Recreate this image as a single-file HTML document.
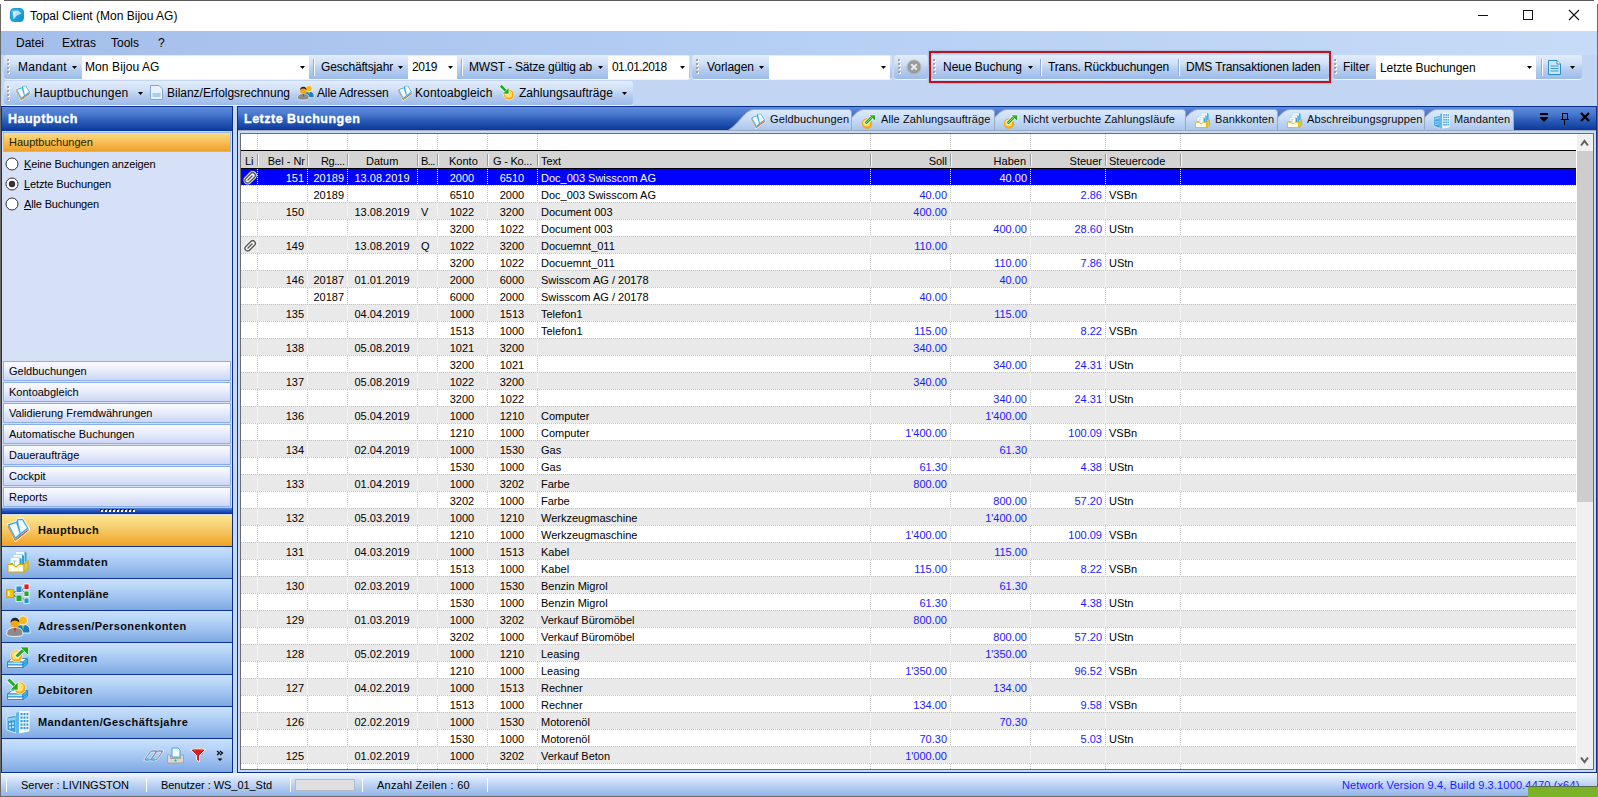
<!DOCTYPE html><html><head><meta charset="utf-8"><style>
html,body{margin:0;padding:0;width:1598px;height:797px;overflow:hidden;background:#fff;}
body{position:relative;font-family:"Liberation Sans",sans-serif;color:#000;}
.t{position:absolute;white-space:nowrap;}
.r{position:absolute;box-sizing:border-box;}
svg{position:absolute;overflow:visible;}
</style></head><body>
<div class="r" style="left:4px;top:0px;width:1590px;height:1px;background:#5b5b5b"></div>
<div class="r" style="left:0px;top:4px;width:1px;height:793px;background:#6a6a6a"></div>
<div class="r" style="left:1597px;top:4px;width:1px;height:793px;background:#6a6a6a"></div>
<svg style="left:10px;top:8px" width="14" height="14"><defs><linearGradient id="ig" x1="0" y1="0" x2="1" y2="1"><stop offset="0" stop-color="#3cb8ea"/><stop offset="1" stop-color="#0a8ccc"/></linearGradient></defs><rect x="0.5" y="0.5" width="13" height="13" rx="3.5" fill="url(#ig)" stroke="#1a9ad6" stroke-width="1"/><path d="M2.5 3 L8 2.5 L11.5 5.5 L7 7.5 L3.5 11.5 Z" fill="#e6f7fd" opacity="0.75"/><path d="M3 4 L6 3.5 L4 9 Z" fill="#fff" opacity="0.7"/></svg>
<div class="t" style="left:30px;top:8.84px;font-size:12px;line-height:14px;">Topal Client (Mon Bijou AG)</div>
<div class="r" style="left:1478px;top:15px;width:10px;height:1px;background:#111"></div>
<div class="r" style="left:1523px;top:10px;width:10px;height:10px;border:1px solid #111"></div>
<svg style="left:1569px;top:10px" width="10" height="10"><path d="M0 0 L10 10 M10 0 L0 10" stroke="#111" stroke-width="1.1"/></svg>
<div class="r" style="left:1px;top:31px;width:1596px;height:24px;background:linear-gradient(to right,#a4beeb,#b6cff4 50%,#c6dbf6)"></div>
<div class="t" style="left:16px;top:35.84px;font-size:12px;line-height:14px;">Datei</div>
<div class="t" style="left:62px;top:35.84px;font-size:12px;line-height:14px;">Extras</div>
<div class="t" style="left:111px;top:35.84px;font-size:12px;line-height:14px;">Tools</div>
<div class="t" style="left:158px;top:35.84px;font-size:12px;line-height:14px;">?</div>
<div class="r" style="left:1px;top:55px;width:1596px;height:51px;background:#c2d6f3"></div>
<div class="r" style="left:4px;top:55px;width:686px;height:24px;background:linear-gradient(to bottom,#e3edfb 0%,#d0e0f7 35%,#b6cdf0 60%,#9dbbe9 100%);border-radius:3px;box-shadow:0 1px 0 #eef4fd;"></div>
<div class="r" style="left:8px;top:60px;width:2px;height:2px;background:#fff"></div>
<div class="r" style="left:7px;top:59px;width:2px;height:2px;background:#aaa294"></div>
<div class="r" style="left:8px;top:64px;width:2px;height:2px;background:#fff"></div>
<div class="r" style="left:7px;top:63px;width:2px;height:2px;background:#aaa294"></div>
<div class="r" style="left:8px;top:68px;width:2px;height:2px;background:#fff"></div>
<div class="r" style="left:7px;top:67px;width:2px;height:2px;background:#aaa294"></div>
<div class="r" style="left:8px;top:72px;width:2px;height:2px;background:#fff"></div>
<div class="r" style="left:7px;top:71px;width:2px;height:2px;background:#aaa294"></div>
<div class="t" style="left:18px;top:59.84px;font-size:12px;line-height:14px;letter-spacing:0.328px;">Mandant</div>
<svg style="left:72px;top:66px" width="5" height="3"><path d="M0 0 H5 L2.5 3 Z" fill="#000"/></svg>
<div class="r" style="left:82px;top:56px;width:227px;height:23px;background:#fff"></div>
<div class="t" style="left:85px;top:59.84px;font-size:12px;line-height:14px;letter-spacing:0.094px;">Mon Bijou AG</div>
<svg style="left:300px;top:66px" width="5" height="3"><path d="M0 0 H5 L2.5 3 Z" fill="#000"/></svg>
<div class="r" style="left:313px;top:59px;width:1px;height:17px;background:#93acd6"></div>
<div class="r" style="left:314px;top:59px;width:1px;height:17px;background:#fff"></div>
<div class="t" style="left:321px;top:59.84px;font-size:12px;line-height:14px;letter-spacing:-0.157px;">Geschäftsjahr</div>
<svg style="left:398px;top:66px" width="5" height="3"><path d="M0 0 H5 L2.5 3 Z" fill="#000"/></svg>
<div class="r" style="left:408px;top:56px;width:49px;height:23px;background:#fff"></div>
<div class="t" style="left:412px;top:59.84px;font-size:12px;line-height:14px;letter-spacing:-0.424px;">2019</div>
<svg style="left:448px;top:66px" width="5" height="3"><path d="M0 0 H5 L2.5 3 Z" fill="#000"/></svg>
<div class="r" style="left:461px;top:59px;width:1px;height:17px;background:#93acd6"></div>
<div class="r" style="left:462px;top:59px;width:1px;height:17px;background:#fff"></div>
<div class="t" style="left:469px;top:59.84px;font-size:12px;line-height:14px;letter-spacing:-0.159px;">MWST - Sätze gültig ab</div>
<svg style="left:598px;top:66px" width="5" height="3"><path d="M0 0 H5 L2.5 3 Z" fill="#000"/></svg>
<div class="r" style="left:608px;top:56px;width:81px;height:23px;background:#fff"></div>
<div class="t" style="left:612px;top:59.84px;font-size:12px;line-height:14px;letter-spacing:-0.556px;">01.01.2018</div>
<svg style="left:680px;top:66px" width="5" height="3"><path d="M0 0 H5 L2.5 3 Z" fill="#000"/></svg>
<div class="r" style="left:692px;top:55px;width:200px;height:24px;background:linear-gradient(to bottom,#e3edfb 0%,#d0e0f7 35%,#b6cdf0 60%,#9dbbe9 100%);border-radius:3px;box-shadow:0 1px 0 #eef4fd;"></div>
<div class="r" style="left:697px;top:60px;width:2px;height:2px;background:#fff"></div>
<div class="r" style="left:696px;top:59px;width:2px;height:2px;background:#aaa294"></div>
<div class="r" style="left:697px;top:64px;width:2px;height:2px;background:#fff"></div>
<div class="r" style="left:696px;top:63px;width:2px;height:2px;background:#aaa294"></div>
<div class="r" style="left:697px;top:68px;width:2px;height:2px;background:#fff"></div>
<div class="r" style="left:696px;top:67px;width:2px;height:2px;background:#aaa294"></div>
<div class="r" style="left:697px;top:72px;width:2px;height:2px;background:#fff"></div>
<div class="r" style="left:696px;top:71px;width:2px;height:2px;background:#aaa294"></div>
<div class="t" style="left:707px;top:59.84px;font-size:12px;line-height:14px;letter-spacing:-0.047px;">Vorlagen</div>
<svg style="left:759px;top:66px" width="5" height="3"><path d="M0 0 H5 L2.5 3 Z" fill="#000"/></svg>
<div class="r" style="left:769px;top:56px;width:121px;height:23px;background:#fff"></div>
<svg style="left:881px;top:66px" width="5" height="3"><path d="M0 0 H5 L2.5 3 Z" fill="#000"/></svg>
<div class="r" style="left:894px;top:55px;width:34px;height:24px;background:linear-gradient(to bottom,#e3edfb 0%,#d0e0f7 35%,#b6cdf0 60%,#9dbbe9 100%);border-radius:3px;box-shadow:0 1px 0 #eef4fd;"></div>
<div class="r" style="left:899px;top:60px;width:2px;height:2px;background:#fff"></div>
<div class="r" style="left:898px;top:59px;width:2px;height:2px;background:#aaa294"></div>
<div class="r" style="left:899px;top:64px;width:2px;height:2px;background:#fff"></div>
<div class="r" style="left:898px;top:63px;width:2px;height:2px;background:#aaa294"></div>
<div class="r" style="left:899px;top:68px;width:2px;height:2px;background:#fff"></div>
<div class="r" style="left:898px;top:67px;width:2px;height:2px;background:#aaa294"></div>
<div class="r" style="left:899px;top:72px;width:2px;height:2px;background:#fff"></div>
<div class="r" style="left:898px;top:71px;width:2px;height:2px;background:#aaa294"></div>
<svg style="left:906px;top:59px" width="16" height="16"><circle cx="8" cy="8" r="7" fill="#9a9a9a"/><circle cx="8" cy="8" r="7" fill="none" stroke="#b8b8b8" stroke-width="1"/><path d="M5.3 5.3 L10.7 10.7 M10.7 5.3 L5.3 10.7" stroke="#e8e8e8" stroke-width="2"/></svg>
<div class="r" style="left:931px;top:55px;width:398px;height:24px;background:linear-gradient(to bottom,#e3edfb 0%,#d0e0f7 35%,#b6cdf0 60%,#9dbbe9 100%);border-radius:3px;box-shadow:0 1px 0 #eef4fd;"></div>
<div class="r" style="left:934px;top:60px;width:2px;height:2px;background:#fff"></div>
<div class="r" style="left:933px;top:59px;width:2px;height:2px;background:#aaa294"></div>
<div class="r" style="left:934px;top:64px;width:2px;height:2px;background:#fff"></div>
<div class="r" style="left:933px;top:63px;width:2px;height:2px;background:#aaa294"></div>
<div class="r" style="left:934px;top:68px;width:2px;height:2px;background:#fff"></div>
<div class="r" style="left:933px;top:67px;width:2px;height:2px;background:#aaa294"></div>
<div class="r" style="left:934px;top:72px;width:2px;height:2px;background:#fff"></div>
<div class="r" style="left:933px;top:71px;width:2px;height:2px;background:#aaa294"></div>
<div class="t" style="left:943px;top:59.84px;font-size:12px;line-height:14px;letter-spacing:-0.033px;">Neue Buchung</div>
<svg style="left:1028px;top:66px" width="5" height="3"><path d="M0 0 H5 L2.5 3 Z" fill="#000"/></svg>
<div class="r" style="left:1040px;top:59px;width:1px;height:17px;background:#93acd6"></div>
<div class="r" style="left:1041px;top:59px;width:1px;height:17px;background:#fff"></div>
<div class="t" style="left:1048px;top:59.84px;font-size:12px;line-height:14px;letter-spacing:-0.132px;">Trans. Rückbuchungen</div>
<div class="r" style="left:1178px;top:59px;width:1px;height:17px;background:#93acd6"></div>
<div class="r" style="left:1179px;top:59px;width:1px;height:17px;background:#fff"></div>
<div class="t" style="left:1186px;top:59.84px;font-size:12px;line-height:14px;letter-spacing:-0.156px;">DMS Transaktionen laden</div>
<div class="r" style="left:929px;top:51px;width:402px;height:32px;border:2px solid #c0101a;box-shadow:0 0 2px rgba(60,60,80,0.35)"></div>
<div class="r" style="left:1333px;top:55px;width:249px;height:24px;background:linear-gradient(to bottom,#e3edfb 0%,#d0e0f7 35%,#b6cdf0 60%,#9dbbe9 100%);border-radius:3px;box-shadow:0 1px 0 #eef4fd;"></div>
<div class="r" style="left:1335px;top:60px;width:2px;height:2px;background:#fff"></div>
<div class="r" style="left:1334px;top:59px;width:2px;height:2px;background:#aaa294"></div>
<div class="r" style="left:1335px;top:64px;width:2px;height:2px;background:#fff"></div>
<div class="r" style="left:1334px;top:63px;width:2px;height:2px;background:#aaa294"></div>
<div class="r" style="left:1335px;top:68px;width:2px;height:2px;background:#fff"></div>
<div class="r" style="left:1334px;top:67px;width:2px;height:2px;background:#aaa294"></div>
<div class="r" style="left:1335px;top:72px;width:2px;height:2px;background:#fff"></div>
<div class="r" style="left:1334px;top:71px;width:2px;height:2px;background:#aaa294"></div>
<div class="t" style="left:1343px;top:59.84px;font-size:12px;line-height:14px;letter-spacing:-0.028px;">Filter</div>
<div class="r" style="left:1376px;top:56px;width:160px;height:23px;background:#fff"></div>
<div class="t" style="left:1380px;top:60.84px;font-size:12px;line-height:14px;letter-spacing:-0.078px;">Letzte Buchungen</div>
<svg style="left:1527px;top:66px" width="5" height="3"><path d="M0 0 H5 L2.5 3 Z" fill="#000"/></svg>
<div class="r" style="left:1541px;top:59px;width:1px;height:17px;background:#93acd6"></div>
<div class="r" style="left:1542px;top:59px;width:1px;height:17px;background:#fff"></div>
<svg style="left:1548px;top:60px" width="13" height="15"><path d="M0.5 0.5 H9 L12.5 4 V14.5 H0.5 Z" fill="#cfe3f5" stroke="#2a8fc4"/><path d="M9 0.5 V4 H12.5" fill="#fff" stroke="#2a8fc4"/><path d="M2.5 6 H10.5 M2.5 8.5 H10.5 M2.5 11 H10.5" stroke="#3b9ad0" stroke-width="1"/></svg>
<svg style="left:1570px;top:66px" width="5" height="3"><path d="M0 0 H5 L2.5 3 Z" fill="#000"/></svg>
<div class="r" style="left:4px;top:81px;width:629px;height:24px;background:linear-gradient(to bottom,#e3edfb 0%,#d0e0f7 35%,#b6cdf0 60%,#9dbbe9 100%);border-radius:3px;box-shadow:0 1px 0 #eef4fd;"></div>
<div class="r" style="left:8px;top:87px;width:2px;height:2px;background:#fff"></div>
<div class="r" style="left:7px;top:86px;width:2px;height:2px;background:#aaa294"></div>
<div class="r" style="left:8px;top:91px;width:2px;height:2px;background:#fff"></div>
<div class="r" style="left:7px;top:90px;width:2px;height:2px;background:#aaa294"></div>
<div class="r" style="left:8px;top:95px;width:2px;height:2px;background:#fff"></div>
<div class="r" style="left:7px;top:94px;width:2px;height:2px;background:#aaa294"></div>
<div class="r" style="left:8px;top:99px;width:2px;height:2px;background:#fff"></div>
<div class="r" style="left:7px;top:98px;width:2px;height:2px;background:#aaa294"></div>
<svg style="left:15px;top:85px" width="16" height="16" viewBox="0 0 24 24"><path d="M0.8 6 L10 2.6 L11 0.4 L17 -0.2 L23.6 10 L23.9 12.4 L9.6 24 L8.4 23.6 Z" fill="#fff"/><path d="M1.8 6.6 L9.2 21 L22.8 10.8 L22.8 12.6 L9.6 23 L8.6 22.6 L1.8 9 Z" fill="#c88a3a"/><path d="M1.8 6.2 L10.4 3.4 L11.2 1.2 L16.8 0.8 L22.6 10.4 L9.3 21 Z" fill="#38a6e0"/><path d="M3.4 7.2 L10.2 5 L13.6 15.6 L9.6 19.2 Z" fill="#f2f9ff"/><path d="M11.9 2.4 L16.1 2 L21 10.1 L14.7 15 Z" fill="#f2f9ff"/><path d="M12.6 19.6 L21.8 12.4" stroke="#e02828" stroke-width="1" stroke-dasharray="1.2 1.2"/></svg>
<div class="t" style="left:34px;top:85.84px;font-size:12px;line-height:14px;letter-spacing:0.22px;">Hauptbuchungen</div>
<svg style="left:138px;top:92px" width="5" height="3"><path d="M0 0 H5 L2.5 3 Z" fill="#000"/></svg>
<svg style="left:150px;top:85px" width="13" height="15"><path d="M0.5 0.5 H9 L12.5 4 V14.5 H0.5 Z" fill="#e9f1fa" stroke="#7fa8cc"/><path d="M2.5 9 H10.5 M2.5 11 H10.5" stroke="#6aaad8"/></svg>
<div class="t" style="left:167px;top:85.84px;font-size:12px;line-height:14px;letter-spacing:-0.019px;">Bilanz/Erfolgsrechnung</div>
<svg style="left:297px;top:84px" width="17" height="17" viewBox="0 0 24 24"><path d="M9 17 Q9 10.5 17.5 10.5 Q24 10.5 24 17 V19 H9 Z" fill="#1a7ad0" stroke="#fff" stroke-width="0.8"/><path d="M15.5 11 L17 16 L18.5 11 Z" fill="#80d040"/><circle cx="17" cy="6.5" r="4.5" fill="#f6b820" stroke="#fff" stroke-width="0.8"/><path d="M0.5 20 Q0.5 13.5 9 13.5 Q17 13.5 17 20 Q17 22.5 9 22.5 Q0.5 22.5 0.5 20 Z" fill="#8c8c8c" stroke="#fff" stroke-width="0.8"/><path d="M8 14 L9 19 L10 14 Z" fill="#e02020"/><circle cx="9" cy="9" r="4.6" fill="#f4a810"/><path d="M4.5 8.5 Q5 3.8 9 3.8 Q13 3.8 13.5 8.5 Q11 6.5 9 6.5 Q6.5 6.5 4.5 8.5 Z" fill="#222"/></svg>
<div class="t" style="left:317px;top:85.84px;font-size:12px;line-height:14px;letter-spacing:-0.145px;">Alle Adressen</div>
<svg style="left:397px;top:85px" width="16" height="16" viewBox="0 0 24 24"><path d="M0.8 6 L10 2.6 L11 0.4 L17 -0.2 L23.6 10 L23.9 12.4 L9.6 24 L8.4 23.6 Z" fill="#fff"/><path d="M1.8 6.6 L9.2 21 L22.8 10.8 L22.8 12.6 L9.6 23 L8.6 22.6 L1.8 9 Z" fill="#c88a3a"/><path d="M1.8 6.2 L10.4 3.4 L11.2 1.2 L16.8 0.8 L22.6 10.4 L9.3 21 Z" fill="#38a6e0"/><path d="M3.4 7.2 L10.2 5 L13.6 15.6 L9.6 19.2 Z" fill="#f2f9ff"/><path d="M11.9 2.4 L16.1 2 L21 10.1 L14.7 15 Z" fill="#f2f9ff"/><path d="M12.6 19.6 L21.8 12.4" stroke="#e02828" stroke-width="1" stroke-dasharray="1.2 1.2"/></svg>
<div class="t" style="left:415px;top:85.84px;font-size:12px;line-height:14px;letter-spacing:0.11px;">Kontoabgleich</div>
<svg style="left:499px;top:84px" width="17" height="17" viewBox="0 0 24 24"><circle cx="14" cy="15" r="7.5" fill="#f4a818" stroke="#fff" stroke-width="0.8"/><circle cx="13.5" cy="14.5" r="5" fill="#ffe060"/><path d="M2.5 2.5 L11 11" stroke="#fff" stroke-width="5.5"/><path d="M2.5 2.5 L11 11" stroke="#22a822" stroke-width="3.6"/><path d="M14 5 V14 H5 Z" fill="#22a822" stroke="#fff" stroke-width="0.8"/></svg>
<div class="t" style="left:519px;top:85.84px;font-size:12px;line-height:14px;letter-spacing:0.037px;">Zahlungsaufträge</div>
<svg style="left:622px;top:92px" width="5" height="3"><path d="M0 0 H5 L2.5 3 Z" fill="#000"/></svg>
<div class="r" style="left:1px;top:106px;width:1596px;height:667px;background:#c6daf6"></div>
<div class="r" style="left:1px;top:106px;width:232px;height:666px;background:#d6e0f7"></div>
<div class="r" style="left:1px;top:106px;width:1px;height:667px;background:#0a2f8f"></div>
<div class="r" style="left:232px;top:106px;width:1px;height:667px;background:#0a2f8f"></div>
<div class="r" style="left:1px;top:106px;width:232px;height:1px;background:#0a2f8f"></div>
<div class="r" style="left:2px;top:107px;width:230px;height:24px;background:linear-gradient(to bottom,#5d8bdc 0%,#4a79cf 30%,#2e5fbb 55%,#1a49a6 82%,#0636a0 100%)"></div>
<div class="t" style="left:8px;top:111.97px;font-size:12.5px;line-height:15px;font-weight:bold;color:#fff;letter-spacing:0.5px;-webkit-text-stroke:0.35px #fff;">Hauptbuch</div>
<div class="r" style="left:2px;top:131px;width:230px;height:2px;background:#c6d8f5"></div>
<div class="r" style="left:3px;top:132px;width:228px;height:20px;background:linear-gradient(to bottom,#fcdc88,#f6bb50 55%,#eea22a);border:1px solid #9ebbe8"></div>
<div class="t" style="left:9px;top:135.69px;font-size:11px;line-height:13px;color:#1b1b00;">Hauptbuchungen</div>
<svg style="left:4.5px;top:156.5px" width="14" height="14"><circle cx="7" cy="7" r="6" fill="#fff" stroke="#333" stroke-width="1"/></svg>
<div class="t" style="left:24px;top:157.69px;font-size:11px;line-height:13px;letter-spacing:-0.128px;"><u>K</u>eine Buchungen anzeigen</div>
<svg style="left:4.5px;top:176.5px" width="14" height="14"><circle cx="7" cy="7" r="6" fill="#fff" stroke="#333" stroke-width="1"/><circle cx="7" cy="7" r="3.2" fill="#333"/></svg>
<div class="t" style="left:24px;top:177.69px;font-size:11px;line-height:13px;letter-spacing:-0.105px;"><u>L</u>etzte Buchungen</div>
<svg style="left:4.5px;top:196.5px" width="14" height="14"><circle cx="7" cy="7" r="6" fill="#fff" stroke="#333" stroke-width="1"/></svg>
<div class="t" style="left:24px;top:197.69px;font-size:11px;line-height:13px;letter-spacing:-0.147px;"><u>A</u>lle Buchungen</div>
<div class="r" style="left:3px;top:361px;width:228px;height:20px;background:linear-gradient(to bottom,#fbfcff,#e8edfb 45%,#cdd7f6);border:1px solid #8aaeea"></div>
<div class="t" style="left:9px;top:364.69px;font-size:11px;line-height:13px;">Geldbuchungen</div>
<div class="r" style="left:3px;top:382px;width:228px;height:20px;background:linear-gradient(to bottom,#fbfcff,#e8edfb 45%,#cdd7f6);border:1px solid #8aaeea"></div>
<div class="t" style="left:9px;top:385.69px;font-size:11px;line-height:13px;">Kontoabgleich</div>
<div class="r" style="left:3px;top:403px;width:228px;height:20px;background:linear-gradient(to bottom,#fbfcff,#e8edfb 45%,#cdd7f6);border:1px solid #8aaeea"></div>
<div class="t" style="left:9px;top:406.69px;font-size:11px;line-height:13px;">Validierung Fremdwährungen</div>
<div class="r" style="left:3px;top:424px;width:228px;height:20px;background:linear-gradient(to bottom,#fbfcff,#e8edfb 45%,#cdd7f6);border:1px solid #8aaeea"></div>
<div class="t" style="left:9px;top:427.69px;font-size:11px;line-height:13px;">Automatische Buchungen</div>
<div class="r" style="left:3px;top:445px;width:228px;height:20px;background:linear-gradient(to bottom,#fbfcff,#e8edfb 45%,#cdd7f6);border:1px solid #8aaeea"></div>
<div class="t" style="left:9px;top:448.69px;font-size:11px;line-height:13px;">Daueraufträge</div>
<div class="r" style="left:3px;top:466px;width:228px;height:20px;background:linear-gradient(to bottom,#fbfcff,#e8edfb 45%,#cdd7f6);border:1px solid #8aaeea"></div>
<div class="t" style="left:9px;top:469.69px;font-size:11px;line-height:13px;">Cockpit</div>
<div class="r" style="left:3px;top:487px;width:228px;height:20px;background:linear-gradient(to bottom,#fbfcff,#e8edfb 45%,#cdd7f6);border:1px solid #8aaeea"></div>
<div class="t" style="left:9px;top:490.69px;font-size:11px;line-height:13px;">Reports</div>
<div class="r" style="left:2px;top:507px;width:230px;height:1px;background:#b4d0f4"></div>
<div class="r" style="left:2px;top:508px;width:230px;height:6px;background:linear-gradient(to bottom,#5588dc,#2a5ac0 45%,#0a2e9c)"></div>
<div class="r" style="left:101px;top:510px;width:2px;height:2px;background:#fff"></div>
<div class="r" style="left:100px;top:509px;width:2px;height:2px;background:#1a1a3a"></div>
<div class="r" style="left:101px;top:510px;width:2px;height:2px;background:#fff"></div>
<div class="r" style="left:105px;top:510px;width:2px;height:2px;background:#fff"></div>
<div class="r" style="left:104px;top:509px;width:2px;height:2px;background:#1a1a3a"></div>
<div class="r" style="left:105px;top:510px;width:2px;height:2px;background:#fff"></div>
<div class="r" style="left:109px;top:510px;width:2px;height:2px;background:#fff"></div>
<div class="r" style="left:108px;top:509px;width:2px;height:2px;background:#1a1a3a"></div>
<div class="r" style="left:109px;top:510px;width:2px;height:2px;background:#fff"></div>
<div class="r" style="left:113px;top:510px;width:2px;height:2px;background:#fff"></div>
<div class="r" style="left:112px;top:509px;width:2px;height:2px;background:#1a1a3a"></div>
<div class="r" style="left:113px;top:510px;width:2px;height:2px;background:#fff"></div>
<div class="r" style="left:117px;top:510px;width:2px;height:2px;background:#fff"></div>
<div class="r" style="left:116px;top:509px;width:2px;height:2px;background:#1a1a3a"></div>
<div class="r" style="left:117px;top:510px;width:2px;height:2px;background:#fff"></div>
<div class="r" style="left:121px;top:510px;width:2px;height:2px;background:#fff"></div>
<div class="r" style="left:120px;top:509px;width:2px;height:2px;background:#1a1a3a"></div>
<div class="r" style="left:121px;top:510px;width:2px;height:2px;background:#fff"></div>
<div class="r" style="left:125px;top:510px;width:2px;height:2px;background:#fff"></div>
<div class="r" style="left:124px;top:509px;width:2px;height:2px;background:#1a1a3a"></div>
<div class="r" style="left:125px;top:510px;width:2px;height:2px;background:#fff"></div>
<div class="r" style="left:129px;top:510px;width:2px;height:2px;background:#fff"></div>
<div class="r" style="left:128px;top:509px;width:2px;height:2px;background:#1a1a3a"></div>
<div class="r" style="left:129px;top:510px;width:2px;height:2px;background:#fff"></div>
<div class="r" style="left:133px;top:510px;width:2px;height:2px;background:#fff"></div>
<div class="r" style="left:132px;top:509px;width:2px;height:2px;background:#1a1a3a"></div>
<div class="r" style="left:133px;top:510px;width:2px;height:2px;background:#fff"></div>
<div class="r" style="left:2px;top:515px;width:230px;height:31px;background:linear-gradient(to bottom,#fde88f,#f5cb6c 45%,#f0a21e)"></div>
<div class="r" style="left:2px;top:546px;width:230px;height:1px;background:#0a2f8f"></div>
<div class="t" style="left:38px;top:523.69px;font-size:11px;line-height:13px;font-weight:bold;color:#0b0b0b;letter-spacing:0.4px;">Hauptbuch</div>
<svg style="left:6px;top:518px" width="24" height="24" viewBox="0 0 24 24"><path d="M0.8 6 L10 2.6 L11 0.4 L17 -0.2 L23.6 10 L23.9 12.4 L9.6 24 L8.4 23.6 Z" fill="#fff"/><path d="M1.8 6.6 L9.2 21 L22.8 10.8 L22.8 12.6 L9.6 23 L8.6 22.6 L1.8 9 Z" fill="#c88a3a"/><path d="M1.8 6.2 L10.4 3.4 L11.2 1.2 L16.8 0.8 L22.6 10.4 L9.3 21 Z" fill="#38a6e0"/><path d="M3.4 7.2 L10.2 5 L13.6 15.6 L9.6 19.2 Z" fill="#f2f9ff"/><path d="M11.9 2.4 L16.1 2 L21 10.1 L14.7 15 Z" fill="#f2f9ff"/><path d="M12.6 19.6 L21.8 12.4" stroke="#e02828" stroke-width="1" stroke-dasharray="1.2 1.2"/></svg>
<div class="r" style="left:2px;top:547px;width:230px;height:31px;background:linear-gradient(to bottom,#cae0fc 0%,#b6d3f8 30%,#9bbfee 65%,#7fa9e2 100%)"></div>
<div class="r" style="left:2px;top:578px;width:230px;height:1px;background:#0a2f8f"></div>
<div class="t" style="left:38px;top:555.69px;font-size:11px;line-height:13px;font-weight:bold;color:#0b0b0b;letter-spacing:0.4px;">Stammdaten</div>
<svg style="left:6px;top:550px" width="24" height="24" viewBox="0 0 24 24"><path d="M9.5 1.5 H18.5 L20.5 3 V11 H9.5 Z" fill="#fafdff" stroke="#a6dbe8" stroke-width="0.9"/><path d="M18.5 1.5 L20.5 3 V11 L18.5 11.5 Z" fill="#2f9fdc"/><path d="M7 4.5 H16 L18 6 V14 H7 Z" fill="#fafdff" stroke="#a6dbe8" stroke-width="0.9"/><path d="M16 4.5 L18 6 V14 L16 14.5 Z" fill="#2f9fdc"/><path d="M4.5 7.5 H13.5 L15.5 9 V17 H4.5 Z" fill="#fafdff" stroke="#a6dbe8" stroke-width="0.9"/><path d="M13.5 7.5 L15.5 9 V17 L13.5 17.5 Z" fill="#2f9fdc"/><path d="M7 11 H10.5 M8.5 11 V16" stroke="#8ccbd8" stroke-width="0.9"/><path d="M6 13 V17" stroke="#20a830" stroke-width="1.6"/><path d="M2 14.5 H7 L10 17 L13 14.5 H18 V22 H2 Z" fill="#fffce8" stroke="#e8a800" stroke-width="1.1"/><path d="M18 14.5 L22 11 V18.5 L18 22 Z" fill="#cdd44a" stroke="#e8a800" stroke-width="1.1"/></svg>
<div class="r" style="left:2px;top:579px;width:230px;height:31px;background:linear-gradient(to bottom,#cae0fc 0%,#b6d3f8 30%,#9bbfee 65%,#7fa9e2 100%)"></div>
<div class="r" style="left:2px;top:610px;width:230px;height:1px;background:#0a2f8f"></div>
<div class="t" style="left:38px;top:587.69px;font-size:11px;line-height:13px;font-weight:bold;color:#0b0b0b;letter-spacing:0.4px;">Kontenpläne</div>
<svg style="left:6px;top:582px" width="24" height="24" viewBox="0 0 24 24"><path d="M7 11 L12 8 M7 13 L12 16 M16 8 L19 5 M16 8 L19 11 M16 16 L19 18" stroke="#333" stroke-width="0.8"/><rect x="0.5" y="7.5" width="7" height="8" fill="#f4c400" stroke="#e0a000"/><rect x="2" y="9" width="1.5" height="5" fill="#fff" opacity="0.8"/><rect x="10" y="4" width="6" height="6.5" fill="#2a8ed8" stroke="#fff" stroke-width="0.8"/><rect x="10" y="13" width="6" height="6.5" fill="#20a830" stroke="#fff" stroke-width="0.8"/><rect x="18" y="2" width="5" height="5.5" fill="#d82020" stroke="#fff" stroke-width="0.8"/><rect x="18" y="9" width="5" height="5.5" fill="#20a830" stroke="#fff" stroke-width="0.8"/><rect x="18" y="16" width="5" height="5.5" fill="#2a8ed8" stroke="#fff" stroke-width="0.8"/></svg>
<div class="r" style="left:2px;top:611px;width:230px;height:31px;background:linear-gradient(to bottom,#cae0fc 0%,#b6d3f8 30%,#9bbfee 65%,#7fa9e2 100%)"></div>
<div class="r" style="left:2px;top:642px;width:230px;height:1px;background:#0a2f8f"></div>
<div class="t" style="left:38px;top:619.69px;font-size:11px;line-height:13px;font-weight:bold;color:#0b0b0b;letter-spacing:0.4px;">Adressen/Personenkonten</div>
<svg style="left:6px;top:614px" width="24" height="24" viewBox="0 0 24 24"><path d="M9 17 Q9 10.5 17.5 10.5 Q24 10.5 24 17 V19 H9 Z" fill="#1a7ad0" stroke="#fff" stroke-width="0.8"/><path d="M15.5 11 L17 16 L18.5 11 Z" fill="#80d040"/><circle cx="17" cy="6.5" r="4.5" fill="#f6b820" stroke="#fff" stroke-width="0.8"/><path d="M0.5 20 Q0.5 13.5 9 13.5 Q17 13.5 17 20 Q17 22.5 9 22.5 Q0.5 22.5 0.5 20 Z" fill="#8c8c8c" stroke="#fff" stroke-width="0.8"/><path d="M8 14 L9 19 L10 14 Z" fill="#e02020"/><circle cx="9" cy="9" r="4.6" fill="#f4a810"/><path d="M4.5 8.5 Q5 3.8 9 3.8 Q13 3.8 13.5 8.5 Q11 6.5 9 6.5 Q6.5 6.5 4.5 8.5 Z" fill="#222"/></svg>
<div class="r" style="left:2px;top:643px;width:230px;height:31px;background:linear-gradient(to bottom,#cae0fc 0%,#b6d3f8 30%,#9bbfee 65%,#7fa9e2 100%)"></div>
<div class="r" style="left:2px;top:674px;width:230px;height:1px;background:#0a2f8f"></div>
<div class="t" style="left:38px;top:651.69px;font-size:11px;line-height:13px;font-weight:bold;color:#0b0b0b;letter-spacing:0.4px;">Kreditoren</div>
<svg style="left:6px;top:646px" width="24" height="24" viewBox="0 0 24 24"><path d="M1.5 16 L6 12.5 H21.5 L17 16 Z" fill="#fff" stroke="#1a8ad0" stroke-width="0.9"/><path d="M1.5 16 H17 V19 H1.5 Z" fill="#bfe6f8" stroke="#1a8ad0" stroke-width="0.9"/><path d="M17 16 L21.5 12.5 V15.5 L17 19 Z" fill="#5ab8e8" stroke="#1a8ad0" stroke-width="0.9"/><path d="M1.5 19 H17 V21.5 H1.5 Z" fill="#fff" stroke="#1a8ad0" stroke-width="0.9"/><path d="M17 19 L21.5 15.5 V18 L17 21.5 Z" fill="#5ab8e8" stroke="#1a8ad0" stroke-width="0.9"/><circle cx="10.5" cy="10" r="6" fill="#f4ac18" stroke="#fff" stroke-width="0.6"/><circle cx="10" cy="9.3" r="4.2" fill="#ffe070"/><path d="M10 11 L19 2.5" stroke="#fff" stroke-width="4.5"/><path d="M10.5 10.5 L18.5 2.8" stroke="#22a822" stroke-width="3"/><path d="M14 1 H22.5 V9.5 Z" fill="#22a822" stroke="#fff" stroke-width="0.6"/></svg>
<div class="r" style="left:2px;top:675px;width:230px;height:31px;background:linear-gradient(to bottom,#cae0fc 0%,#b6d3f8 30%,#9bbfee 65%,#7fa9e2 100%)"></div>
<div class="r" style="left:2px;top:706px;width:230px;height:1px;background:#0a2f8f"></div>
<div class="t" style="left:38px;top:683.69px;font-size:11px;line-height:13px;font-weight:bold;color:#0b0b0b;letter-spacing:0.4px;">Debitoren</div>
<svg style="left:6px;top:678px" width="24" height="24" viewBox="0 0 24 24"><path d="M1.5 16 L6 12.5 H21.5 L17 16 Z" fill="#fff" stroke="#1a8ad0" stroke-width="0.9"/><path d="M1.5 16 H17 V19 H1.5 Z" fill="#bfe6f8" stroke="#1a8ad0" stroke-width="0.9"/><path d="M17 16 L21.5 12.5 V15.5 L17 19 Z" fill="#5ab8e8" stroke="#1a8ad0" stroke-width="0.9"/><path d="M1.5 19 H17 V21.5 H1.5 Z" fill="#fff" stroke="#1a8ad0" stroke-width="0.9"/><path d="M17 19 L21.5 15.5 V18 L17 21.5 Z" fill="#5ab8e8" stroke="#1a8ad0" stroke-width="0.9"/><circle cx="14" cy="10" r="6" fill="#f4ac18" stroke="#fff" stroke-width="0.6"/><circle cx="13.5" cy="9.3" r="4.2" fill="#ffe070"/><path d="M2.5 1.5 L9.5 8.5" stroke="#fff" stroke-width="4.5"/><path d="M2.5 1.5 L9.5 8.5" stroke="#22a822" stroke-width="3"/><path d="M12 4 V12 H4 Z" fill="#22a822" stroke="#fff" stroke-width="0.6"/></svg>
<div class="r" style="left:2px;top:707px;width:230px;height:31px;background:linear-gradient(to bottom,#cae0fc 0%,#b6d3f8 30%,#9bbfee 65%,#7fa9e2 100%)"></div>
<div class="r" style="left:2px;top:738px;width:230px;height:1px;background:#0a2f8f"></div>
<div class="t" style="left:38px;top:715.69px;font-size:11px;line-height:13px;font-weight:bold;color:#0b0b0b;letter-spacing:0.4px;">Mandanten/Geschäftsjahre</div>
<svg style="left:6px;top:710px" width="24" height="24" viewBox="0 0 24 24"><path d="M1 7 L10 5 V23 L1 20 Z" fill="#3a9ee0" stroke="#fff" stroke-width="0.7"/><path d="M2 8.5 L9 7 V10 L2 11 Z" fill="#8fd0f4"/><path d="M10 3 L13.5 1.5 V23 L10 23 Z" fill="#60b8e8"/><path d="M13.5 1.5 H23 V21 L13.5 23 Z" fill="#eef9ff" stroke="#fff" stroke-width="0.8"/><g fill="#3596d8"><rect x="14.5" y="3" width="2" height="2.2"/><rect x="17.5" y="3" width="2" height="2.2"/><rect x="20.5" y="3" width="1.8" height="2.2"/><rect x="14.5" y="6.5" width="2" height="2.2"/><rect x="17.5" y="6.5" width="2" height="2.2"/><rect x="20.5" y="6.5" width="1.8" height="2.2"/><rect x="14.5" y="10" width="2" height="2.2"/><rect x="17.5" y="10" width="2" height="2.2"/><rect x="20.5" y="10" width="1.8" height="2.2"/><rect x="14.5" y="13.5" width="2" height="2.2"/><rect x="17.5" y="13.5" width="2" height="2.2"/><rect x="20.5" y="13.5" width="1.8" height="2.2"/><rect x="14.5" y="17" width="2" height="2.2"/><rect x="17.5" y="17" width="2" height="2.2"/><rect x="20.5" y="17" width="1.8" height="2.2"/></g><g fill="#bfe6fa"><rect x="3" y="13" width="2" height="2"/><rect x="6" y="12.5" width="2" height="2"/><rect x="3" y="16.5" width="2" height="2"/><rect x="6" y="16" width="2" height="2"/></g></svg>
<div class="r" style="left:2px;top:739px;width:230px;height:33px;background:linear-gradient(to bottom,#cae0fc 0%,#b6d3f8 30%,#9bbfee 65%,#7fa9e2 100%)"></div>
<div class="r" style="left:2px;top:772px;width:231px;height:1px;background:#0a2f8f"></div>
<svg style="left:144px;top:748px" width="18" height="15" viewBox="0 0 18 15"><g transform="skewX(-35)"><rect x="9" y="3" width="6" height="9" rx="1.5" fill="none" stroke="#fff" stroke-width="2.6"/><rect x="15" y="3" width="6" height="9" rx="1.5" fill="none" stroke="#fff" stroke-width="2.6"/><rect x="9" y="3" width="6" height="9" rx="1.5" fill="none" stroke="#7c90b8" stroke-width="1.4"/><rect x="15" y="3" width="6" height="9" rx="1.5" fill="none" stroke="#7c90b8" stroke-width="1.4"/></g><circle cx="3.5" cy="11.5" r="1.4" fill="#40c0f8"/><circle cx="9.5" cy="11.5" r="1.4" fill="#40c0f8"/></svg>
<svg style="left:167px;top:747px" width="17" height="17" viewBox="0 0 17 17"><path d="M5 1 H11 L13 3 V10 H5 Z" fill="#f4f8fc" stroke="#30a0e0" stroke-width="0.9"/><path d="M0.5 8 H3.5 V11.5 H13.5 V8 H16.5 V16 H0.5 Z" fill="#d8d8d8" stroke="#a0a0a0" stroke-width="0.9"/><path d="M8.5 12.5 V14.5 M7.5 13.5 H9.5" stroke="#20c040" stroke-width="1.2"/></svg>
<svg style="left:190px;top:748px" width="16" height="15" viewBox="0 0 16 15"><path d="M0.5 1.5 Q8 -1 15.5 1.5 L9.5 7.5 V14 L6.5 12 V7.5 Z" fill="#d02020" stroke="#fff" stroke-width="0.9"/><path d="M3 2 Q8 0.5 13 2" stroke="#f07040" stroke-width="1" fill="none"/></svg>
<svg style="left:216px;top:750px" width="8" height="12" viewBox="0 0 8 12"><path d="M1 1 L3.5 3 L1 5 M4 1 L6.5 3 L4 5" fill="none" stroke="#000" stroke-width="1.2"/><path d="M1.5 8.5 H6.5 L4 11 Z" fill="#000"/></svg>
<div class="r" style="left:237px;top:106px;width:1360px;height:667px;background:#c7dbf6"></div>
<div class="r" style="left:237px;top:106px;width:1px;height:667px;background:#0a2f8f"></div>
<div class="r" style="left:1596px;top:106px;width:1px;height:667px;background:#0a2f8f"></div>
<div class="r" style="left:237px;top:106px;width:1360px;height:1px;background:#0a2f8f"></div>
<div class="r" style="left:237px;top:772px;width:1360px;height:1px;background:#0a2f8f"></div>
<div class="r" style="left:238px;top:107px;width:1358px;height:23px;background:linear-gradient(to bottom,#5d8bdc 0%,#4a79cf 30%,#2e5fbb 55%,#1a49a6 82%,#0636a0 100%)"></div>
<div class="t" style="left:244px;top:111.97px;font-size:12.5px;line-height:15px;font-weight:bold;color:#fff;letter-spacing:0.5px;-webkit-text-stroke:0.35px #fff;">Letzte Buchungen</div>
<div class="r" style="left:238px;top:130px;width:1358px;height:1px;background:#a4aab8"></div>
<svg style="left:1409px;top:109px" width="105" height="22"><defs><linearGradient id="tg5" x1="0" y1="0" x2="0" y2="1"><stop offset="0" stop-color="#dceafc"/><stop offset="0.45" stop-color="#c9dcf7"/><stop offset="1" stop-color="#a9c5ed"/></linearGradient></defs><path d="M2 21.5 C14 14 19 0.5 28 0.5 H101.5 Q104.5 0.5 104.5 3.5 V21.5 Z" fill="url(#tg5)" stroke="#9aa8c0" stroke-width="1"/></svg>
<svg style="left:1433px;top:112px" width="17" height="17" viewBox="0 0 24 24"><path d="M1 7 L10 5 V23 L1 20 Z" fill="#3a9ee0" stroke="#fff" stroke-width="0.7"/><path d="M2 8.5 L9 7 V10 L2 11 Z" fill="#8fd0f4"/><path d="M10 3 L13.5 1.5 V23 L10 23 Z" fill="#60b8e8"/><path d="M13.5 1.5 H23 V21 L13.5 23 Z" fill="#eef9ff" stroke="#fff" stroke-width="0.8"/><g fill="#3596d8"><rect x="14.5" y="3" width="2" height="2.2"/><rect x="17.5" y="3" width="2" height="2.2"/><rect x="20.5" y="3" width="1.8" height="2.2"/><rect x="14.5" y="6.5" width="2" height="2.2"/><rect x="17.5" y="6.5" width="2" height="2.2"/><rect x="20.5" y="6.5" width="1.8" height="2.2"/><rect x="14.5" y="10" width="2" height="2.2"/><rect x="17.5" y="10" width="2" height="2.2"/><rect x="20.5" y="10" width="1.8" height="2.2"/><rect x="14.5" y="13.5" width="2" height="2.2"/><rect x="17.5" y="13.5" width="2" height="2.2"/><rect x="20.5" y="13.5" width="1.8" height="2.2"/><rect x="14.5" y="17" width="2" height="2.2"/><rect x="17.5" y="17" width="2" height="2.2"/><rect x="20.5" y="17" width="1.8" height="2.2"/></g><g fill="#bfe6fa"><rect x="3" y="13" width="2" height="2"/><rect x="6" y="12.5" width="2" height="2"/><rect x="3" y="16.5" width="2" height="2"/><rect x="6" y="16" width="2" height="2"/></g></svg>
<div class="t" style="left:1454px;top:112.69px;font-size:11px;line-height:13px;color:#0b0b0b;letter-spacing:0.12px;">Mandanten</div>
<svg style="left:1262px;top:109px" width="163" height="22"><defs><linearGradient id="tg4" x1="0" y1="0" x2="0" y2="1"><stop offset="0" stop-color="#dceafc"/><stop offset="0.45" stop-color="#c9dcf7"/><stop offset="1" stop-color="#a9c5ed"/></linearGradient></defs><path d="M2 21.5 C14 14 19 0.5 28 0.5 H159.5 Q162.5 0.5 162.5 3.5 V21.5 Z" fill="url(#tg4)" stroke="#9aa8c0" stroke-width="1"/></svg>
<svg style="left:1286px;top:112px" width="17" height="17" viewBox="0 0 24 24"><path d="M9.5 1.5 H18.5 L20.5 3 V11 H9.5 Z" fill="#fafdff" stroke="#a6dbe8" stroke-width="0.9"/><path d="M18.5 1.5 L20.5 3 V11 L18.5 11.5 Z" fill="#2f9fdc"/><path d="M7 4.5 H16 L18 6 V14 H7 Z" fill="#fafdff" stroke="#a6dbe8" stroke-width="0.9"/><path d="M16 4.5 L18 6 V14 L16 14.5 Z" fill="#2f9fdc"/><path d="M4.5 7.5 H13.5 L15.5 9 V17 H4.5 Z" fill="#fafdff" stroke="#a6dbe8" stroke-width="0.9"/><path d="M13.5 7.5 L15.5 9 V17 L13.5 17.5 Z" fill="#2f9fdc"/><path d="M7 11 H10.5 M8.5 11 V16" stroke="#8ccbd8" stroke-width="0.9"/><path d="M6 13 V17" stroke="#20a830" stroke-width="1.6"/><path d="M2 14.5 H7 L10 17 L13 14.5 H18 V22 H2 Z" fill="#fffce8" stroke="#e8a800" stroke-width="1.1"/><path d="M18 14.5 L22 11 V18.5 L18 22 Z" fill="#cdd44a" stroke="#e8a800" stroke-width="1.1"/></svg>
<div class="t" style="left:1307px;top:112.69px;font-size:11px;line-height:13px;color:#0b0b0b;letter-spacing:0.12px;">Abschreibungsgruppen</div>
<svg style="left:1170px;top:109px" width="108" height="22"><defs><linearGradient id="tg3" x1="0" y1="0" x2="0" y2="1"><stop offset="0" stop-color="#dceafc"/><stop offset="0.45" stop-color="#c9dcf7"/><stop offset="1" stop-color="#a9c5ed"/></linearGradient></defs><path d="M2 21.5 C14 14 19 0.5 28 0.5 H104.5 Q107.5 0.5 107.5 3.5 V21.5 Z" fill="url(#tg3)" stroke="#9aa8c0" stroke-width="1"/></svg>
<svg style="left:1194px;top:112px" width="17" height="17" viewBox="0 0 24 24"><path d="M9.5 1.5 H18.5 L20.5 3 V11 H9.5 Z" fill="#fafdff" stroke="#a6dbe8" stroke-width="0.9"/><path d="M18.5 1.5 L20.5 3 V11 L18.5 11.5 Z" fill="#2f9fdc"/><path d="M7 4.5 H16 L18 6 V14 H7 Z" fill="#fafdff" stroke="#a6dbe8" stroke-width="0.9"/><path d="M16 4.5 L18 6 V14 L16 14.5 Z" fill="#2f9fdc"/><path d="M4.5 7.5 H13.5 L15.5 9 V17 H4.5 Z" fill="#fafdff" stroke="#a6dbe8" stroke-width="0.9"/><path d="M13.5 7.5 L15.5 9 V17 L13.5 17.5 Z" fill="#2f9fdc"/><path d="M7 11 H10.5 M8.5 11 V16" stroke="#8ccbd8" stroke-width="0.9"/><path d="M6 13 V17" stroke="#20a830" stroke-width="1.6"/><path d="M2 14.5 H7 L10 17 L13 14.5 H18 V22 H2 Z" fill="#fffce8" stroke="#e8a800" stroke-width="1.1"/><path d="M18 14.5 L22 11 V18.5 L18 22 Z" fill="#cdd44a" stroke="#e8a800" stroke-width="1.1"/></svg>
<div class="t" style="left:1215px;top:112.69px;font-size:11px;line-height:13px;color:#0b0b0b;letter-spacing:0.12px;">Bankkonten</div>
<svg style="left:979px;top:109px" width="207" height="22"><defs><linearGradient id="tg2" x1="0" y1="0" x2="0" y2="1"><stop offset="0" stop-color="#dceafc"/><stop offset="0.45" stop-color="#c9dcf7"/><stop offset="1" stop-color="#a9c5ed"/></linearGradient></defs><path d="M2 21.5 C14 14 19 0.5 28 0.5 H203.5 Q206.5 0.5 206.5 3.5 V21.5 Z" fill="url(#tg2)" stroke="#9aa8c0" stroke-width="1"/></svg>
<svg style="left:1003px;top:113px" width="16" height="16" viewBox="0 0 16 16"><circle cx="6" cy="10.5" r="5.2" fill="#f2a818"/><circle cx="5.6" cy="10" r="3.6" fill="#ffd84a"/><path d="M4 11 L11.5 3.5" stroke="#fff" stroke-width="4.2"/><path d="M4.5 10.5 L11.5 3.5" stroke="#22a822" stroke-width="2.8"/><path d="M8 2 H14.5 V8.5 Z" fill="#22a822" stroke="#fff" stroke-width="0.6"/><path d="M5 10 L11.5 3.5" stroke="#7ee05a" stroke-width="1"/></svg>
<div class="t" style="left:1023px;top:112.69px;font-size:11px;line-height:13px;color:#0b0b0b;letter-spacing:0.12px;">Nicht verbuchte Zahlungsläufe</div>
<svg style="left:836px;top:109px" width="159" height="22"><defs><linearGradient id="tg1" x1="0" y1="0" x2="0" y2="1"><stop offset="0" stop-color="#dceafc"/><stop offset="0.45" stop-color="#c9dcf7"/><stop offset="1" stop-color="#a9c5ed"/></linearGradient></defs><path d="M2 21.5 C14 14 19 0.5 28 0.5 H155.5 Q158.5 0.5 158.5 3.5 V21.5 Z" fill="url(#tg1)" stroke="#9aa8c0" stroke-width="1"/></svg>
<svg style="left:861px;top:113px" width="16" height="16" viewBox="0 0 16 16"><circle cx="6" cy="10.5" r="5.2" fill="#f2a818"/><circle cx="5.6" cy="10" r="3.6" fill="#ffd84a"/><path d="M4 11 L11.5 3.5" stroke="#fff" stroke-width="4.2"/><path d="M4.5 10.5 L11.5 3.5" stroke="#22a822" stroke-width="2.8"/><path d="M8 2 H14.5 V8.5 Z" fill="#22a822" stroke="#fff" stroke-width="0.6"/><path d="M5 10 L11.5 3.5" stroke="#7ee05a" stroke-width="1"/></svg>
<div class="t" style="left:881px;top:112.69px;font-size:11px;line-height:13px;color:#0b0b0b;letter-spacing:0.12px;">Alle Zahlungsaufträge</div>
<svg style="left:726px;top:109px" width="126" height="22"><defs><linearGradient id="tg0" x1="0" y1="0" x2="0" y2="1"><stop offset="0" stop-color="#dceafc"/><stop offset="0.45" stop-color="#c9dcf7"/><stop offset="1" stop-color="#a9c5ed"/></linearGradient></defs><path d="M2 21.5 C14 14 19 0.5 28 0.5 H122.5 Q125.5 0.5 125.5 3.5 V21.5 Z" fill="url(#tg0)" stroke="#9aa8c0" stroke-width="1"/></svg>
<svg style="left:750px;top:113px" width="16" height="16" viewBox="0 0 24 24"><path d="M0.8 6 L10 2.6 L11 0.4 L17 -0.2 L23.6 10 L23.9 12.4 L9.6 24 L8.4 23.6 Z" fill="#fff"/><path d="M1.8 6.6 L9.2 21 L22.8 10.8 L22.8 12.6 L9.6 23 L8.6 22.6 L1.8 9 Z" fill="#c88a3a"/><path d="M1.8 6.2 L10.4 3.4 L11.2 1.2 L16.8 0.8 L22.6 10.4 L9.3 21 Z" fill="#38a6e0"/><path d="M3.4 7.2 L10.2 5 L13.6 15.6 L9.6 19.2 Z" fill="#f2f9ff"/><path d="M11.9 2.4 L16.1 2 L21 10.1 L14.7 15 Z" fill="#f2f9ff"/><path d="M12.6 19.6 L21.8 12.4" stroke="#e02828" stroke-width="1" stroke-dasharray="1.2 1.2"/></svg>
<div class="t" style="left:770px;top:112.69px;font-size:11px;line-height:13px;color:#0b0b0b;letter-spacing:0.12px;">Geldbuchungen</div>
<div class="r" style="left:1540px;top:113px;width:8px;height:2px;background:#000"></div>
<svg style="left:1540px;top:117px" width="8" height="5"><path d="M0 0 H8 V1 L4 5 L0 1 Z" fill="#000"/></svg>
<div class="r" style="left:1562px;top:113px;width:6px;height:7px;border:1px solid #000"></div>
<div class="r" style="left:1561px;top:119px;width:8px;height:1px;background:#000"></div>
<div class="r" style="left:1564px;top:120px;width:1px;height:5px;background:#000"></div>
<svg style="left:1580px;top:112px" width="10" height="10"><path d="M1 1 L9 9 M9 1 L1 9" stroke="#000" stroke-width="2.3"/></svg>
<div class="r" style="left:240px;top:133px;width:1354px;height:637px;background:#fff;border:1px solid #6d6d6d"></div>
<div class="r" style="left:257px;top:134px;width:1px;height:16px;background:linear-gradient(#c4c4c4 50%,transparent 50%);background-size:1px 2px;background-position:0 0px"></div>
<div class="r" style="left:307px;top:134px;width:1px;height:16px;background:linear-gradient(#c4c4c4 50%,transparent 50%);background-size:1px 2px;background-position:0 0px"></div>
<div class="r" style="left:347px;top:134px;width:1px;height:16px;background:linear-gradient(#c4c4c4 50%,transparent 50%);background-size:1px 2px;background-position:0 0px"></div>
<div class="r" style="left:417px;top:134px;width:1px;height:16px;background:linear-gradient(#c4c4c4 50%,transparent 50%);background-size:1px 2px;background-position:0 0px"></div>
<div class="r" style="left:437px;top:134px;width:1px;height:16px;background:linear-gradient(#c4c4c4 50%,transparent 50%);background-size:1px 2px;background-position:0 0px"></div>
<div class="r" style="left:487px;top:134px;width:1px;height:16px;background:linear-gradient(#c4c4c4 50%,transparent 50%);background-size:1px 2px;background-position:0 0px"></div>
<div class="r" style="left:537px;top:134px;width:1px;height:16px;background:linear-gradient(#c4c4c4 50%,transparent 50%);background-size:1px 2px;background-position:0 0px"></div>
<div class="r" style="left:870px;top:134px;width:1px;height:16px;background:linear-gradient(#c4c4c4 50%,transparent 50%);background-size:1px 2px;background-position:0 0px"></div>
<div class="r" style="left:950px;top:134px;width:1px;height:16px;background:linear-gradient(#c4c4c4 50%,transparent 50%);background-size:1px 2px;background-position:0 0px"></div>
<div class="r" style="left:1030px;top:134px;width:1px;height:16px;background:linear-gradient(#c4c4c4 50%,transparent 50%);background-size:1px 2px;background-position:0 0px"></div>
<div class="r" style="left:1105px;top:134px;width:1px;height:16px;background:linear-gradient(#c4c4c4 50%,transparent 50%);background-size:1px 2px;background-position:0 0px"></div>
<div class="r" style="left:1180px;top:134px;width:1px;height:16px;background:linear-gradient(#c4c4c4 50%,transparent 50%);background-size:1px 2px;background-position:0 0px"></div>
<div class="r" style="left:241px;top:150px;width:1335px;height:1px;background:#000"></div>
<div class="r" style="left:241px;top:151px;width:1335px;height:17px;background:#d4d4d4"></div>
<div class="r" style="left:241px;top:168px;width:1335px;height:1px;background:#000"></div>
<div class="r" style="left:257px;top:154px;width:1px;height:12px;background:#9a9a9a"></div>
<div class="r" style="left:258px;top:154px;width:1px;height:12px;background:#f4f4f4"></div>
<div class="r" style="left:307px;top:154px;width:1px;height:12px;background:#9a9a9a"></div>
<div class="r" style="left:308px;top:154px;width:1px;height:12px;background:#f4f4f4"></div>
<div class="r" style="left:347px;top:154px;width:1px;height:12px;background:#9a9a9a"></div>
<div class="r" style="left:348px;top:154px;width:1px;height:12px;background:#f4f4f4"></div>
<div class="r" style="left:417px;top:154px;width:1px;height:12px;background:#9a9a9a"></div>
<div class="r" style="left:418px;top:154px;width:1px;height:12px;background:#f4f4f4"></div>
<div class="r" style="left:437px;top:154px;width:1px;height:12px;background:#9a9a9a"></div>
<div class="r" style="left:438px;top:154px;width:1px;height:12px;background:#f4f4f4"></div>
<div class="r" style="left:487px;top:154px;width:1px;height:12px;background:#9a9a9a"></div>
<div class="r" style="left:488px;top:154px;width:1px;height:12px;background:#f4f4f4"></div>
<div class="r" style="left:537px;top:154px;width:1px;height:12px;background:#9a9a9a"></div>
<div class="r" style="left:538px;top:154px;width:1px;height:12px;background:#f4f4f4"></div>
<div class="r" style="left:870px;top:154px;width:1px;height:12px;background:#9a9a9a"></div>
<div class="r" style="left:871px;top:154px;width:1px;height:12px;background:#f4f4f4"></div>
<div class="r" style="left:950px;top:154px;width:1px;height:12px;background:#9a9a9a"></div>
<div class="r" style="left:951px;top:154px;width:1px;height:12px;background:#f4f4f4"></div>
<div class="r" style="left:1030px;top:154px;width:1px;height:12px;background:#9a9a9a"></div>
<div class="r" style="left:1031px;top:154px;width:1px;height:12px;background:#f4f4f4"></div>
<div class="r" style="left:1105px;top:154px;width:1px;height:12px;background:#9a9a9a"></div>
<div class="r" style="left:1106px;top:154px;width:1px;height:12px;background:#f4f4f4"></div>
<div class="r" style="left:1180px;top:154px;width:1px;height:12px;background:#9a9a9a"></div>
<div class="r" style="left:1181px;top:154px;width:1px;height:12px;background:#f4f4f4"></div>
<div class="t" style="left:245px;top:155.09px;font-size:11px;line-height:13px;">Li</div>
<div class="t" style="left:245px;width:60px;text-align:right;top:155.09px;font-size:11px;line-height:13px;">Bel - Nr</div>
<div class="t" style="left:321px;top:155.09px;font-size:11px;line-height:13px;letter-spacing:-0.464px;">Rg....</div>
<div class="t" style="left:366px;top:155.09px;font-size:11px;line-height:13px;">Datum</div>
<div class="t" style="left:421px;top:155.09px;font-size:11px;line-height:13px;letter-spacing:-0.751px;">B...</div>
<div class="t" style="left:449px;top:155.09px;font-size:11px;line-height:13px;">Konto</div>
<div class="t" style="left:493px;top:155.09px;font-size:11px;line-height:13px;letter-spacing:-0.217px;">G - Ko...</div>
<div class="t" style="left:541px;top:155.09px;font-size:11px;line-height:13px;">Text</div>
<div class="t" style="left:887px;width:60px;text-align:right;top:155.09px;font-size:11px;line-height:13px;">Soll</div>
<div class="t" style="left:966px;width:60px;text-align:right;top:155.09px;font-size:11px;line-height:13px;">Haben</div>
<div class="t" style="left:1042px;width:60px;text-align:right;top:155.09px;font-size:11px;line-height:13px;">Steuer</div>
<div class="t" style="left:1109px;top:155.09px;font-size:11px;line-height:13px;">Steuercode</div>
<div class="r" style="left:241px;top:169px;width:1335px;height:16px;background:#0000ff"></div>
<div class="r" style="left:257px;top:169px;width:1px;height:16px;background:linear-gradient(#fff 50%,transparent 50%);background-size:1px 2px;background-position:0 0px"></div>
<div class="r" style="left:307px;top:169px;width:1px;height:16px;background:linear-gradient(#fff 50%,transparent 50%);background-size:1px 2px;background-position:0 0px"></div>
<div class="r" style="left:347px;top:169px;width:1px;height:16px;background:linear-gradient(#fff 50%,transparent 50%);background-size:1px 2px;background-position:0 0px"></div>
<div class="r" style="left:417px;top:169px;width:1px;height:16px;background:linear-gradient(#fff 50%,transparent 50%);background-size:1px 2px;background-position:0 0px"></div>
<div class="r" style="left:437px;top:169px;width:1px;height:16px;background:linear-gradient(#fff 50%,transparent 50%);background-size:1px 2px;background-position:0 0px"></div>
<div class="r" style="left:487px;top:169px;width:1px;height:16px;background:linear-gradient(#fff 50%,transparent 50%);background-size:1px 2px;background-position:0 0px"></div>
<div class="r" style="left:537px;top:169px;width:1px;height:16px;background:linear-gradient(#fff 50%,transparent 50%);background-size:1px 2px;background-position:0 0px"></div>
<div class="r" style="left:870px;top:169px;width:1px;height:16px;background:linear-gradient(#fff 50%,transparent 50%);background-size:1px 2px;background-position:0 0px"></div>
<div class="r" style="left:950px;top:169px;width:1px;height:16px;background:linear-gradient(#fff 50%,transparent 50%);background-size:1px 2px;background-position:0 0px"></div>
<div class="r" style="left:1030px;top:169px;width:1px;height:16px;background:linear-gradient(#fff 50%,transparent 50%);background-size:1px 2px;background-position:0 0px"></div>
<div class="r" style="left:1105px;top:169px;width:1px;height:16px;background:linear-gradient(#fff 50%,transparent 50%);background-size:1px 2px;background-position:0 0px"></div>
<div class="r" style="left:1180px;top:169px;width:1px;height:16px;background:linear-gradient(#fff 50%,transparent 50%);background-size:1px 2px;background-position:0 0px"></div>
<div class="r" style="left:241px;top:185px;width:1335px;height:1px;background:linear-gradient(to right,#c8c8c8 50%,transparent 50%);background-size:2px 1px;background-position:0px 0"></div>
<svg style="left:241px;top:169px" width="17" height="17"><g transform="rotate(-45 9 9)"><rect x="3" y="6.3" width="12.5" height="5.4" rx="2.7" fill="none" stroke="#fff" stroke-width="3"/><rect x="3" y="6.3" width="12.5" height="5.4" rx="2.7" fill="#f4f4f4" stroke="#555" stroke-width="1.4"/><path d="M5.5 9 H12.5" stroke="#555" stroke-width="1.2"/></g></svg>
<div class="t" style="left:259px;width:45px;text-align:right;top:171.69px;font-size:11px;line-height:13px;color:#fff;">151</div>
<div class="t" style="left:308px;width:36px;text-align:right;top:171.69px;font-size:11px;line-height:13px;color:#fff;">20189</div>
<div class="t" style="left:347px;width:70px;text-align:center;top:170.99px;font-size:11px;line-height:14.4px;color:#fff">13.08.2019</div>
<div class="t" style="left:437px;width:50px;text-align:center;top:170.99px;font-size:11px;line-height:14.4px;color:#fff">2000</div>
<div class="t" style="left:487px;width:50px;text-align:center;top:170.99px;font-size:11px;line-height:14.4px;color:#fff">6510</div>
<div class="t" style="left:541px;top:171.69px;font-size:11px;line-height:13px;color:#fff;">Doc_003 Swisscom AG</div>
<div class="t" style="left:951px;width:76px;text-align:right;top:171.69px;font-size:11px;line-height:13px;color:#fff;">40.00</div>
<div class="r" style="left:257px;top:186px;width:1px;height:16px;background:linear-gradient(#c4c4c4 50%,transparent 50%);background-size:1px 2px;background-position:0 0px"></div>
<div class="r" style="left:307px;top:186px;width:1px;height:16px;background:linear-gradient(#c4c4c4 50%,transparent 50%);background-size:1px 2px;background-position:0 0px"></div>
<div class="r" style="left:347px;top:186px;width:1px;height:16px;background:linear-gradient(#c4c4c4 50%,transparent 50%);background-size:1px 2px;background-position:0 0px"></div>
<div class="r" style="left:417px;top:186px;width:1px;height:16px;background:linear-gradient(#c4c4c4 50%,transparent 50%);background-size:1px 2px;background-position:0 0px"></div>
<div class="r" style="left:437px;top:186px;width:1px;height:16px;background:linear-gradient(#c4c4c4 50%,transparent 50%);background-size:1px 2px;background-position:0 0px"></div>
<div class="r" style="left:487px;top:186px;width:1px;height:16px;background:linear-gradient(#c4c4c4 50%,transparent 50%);background-size:1px 2px;background-position:0 0px"></div>
<div class="r" style="left:537px;top:186px;width:1px;height:16px;background:linear-gradient(#c4c4c4 50%,transparent 50%);background-size:1px 2px;background-position:0 0px"></div>
<div class="r" style="left:870px;top:186px;width:1px;height:16px;background:linear-gradient(#c4c4c4 50%,transparent 50%);background-size:1px 2px;background-position:0 0px"></div>
<div class="r" style="left:950px;top:186px;width:1px;height:16px;background:linear-gradient(#c4c4c4 50%,transparent 50%);background-size:1px 2px;background-position:0 0px"></div>
<div class="r" style="left:1030px;top:186px;width:1px;height:16px;background:linear-gradient(#c4c4c4 50%,transparent 50%);background-size:1px 2px;background-position:0 0px"></div>
<div class="r" style="left:1105px;top:186px;width:1px;height:16px;background:linear-gradient(#c4c4c4 50%,transparent 50%);background-size:1px 2px;background-position:0 0px"></div>
<div class="r" style="left:1180px;top:186px;width:1px;height:16px;background:linear-gradient(#c4c4c4 50%,transparent 50%);background-size:1px 2px;background-position:0 0px"></div>
<div class="t" style="left:308px;width:36px;text-align:right;top:188.69px;font-size:11px;line-height:13px;color:#000;">20189</div>
<div class="t" style="left:437px;width:50px;text-align:center;top:187.99px;font-size:11px;line-height:14.4px;color:#000">6510</div>
<div class="t" style="left:487px;width:50px;text-align:center;top:187.99px;font-size:11px;line-height:14.4px;color:#000">2000</div>
<div class="t" style="left:541px;top:188.69px;font-size:11px;line-height:13px;color:#000;">Doc_003 Swisscom AG</div>
<div class="t" style="left:871px;width:76px;text-align:right;top:188.69px;font-size:11px;line-height:13px;color:#1a1aff;">40.00</div>
<div class="t" style="left:1032px;width:70px;text-align:right;top:188.69px;font-size:11px;line-height:13px;color:#1a1aff;">2.86</div>
<div class="t" style="left:1109px;top:188.69px;font-size:11px;line-height:13px;color:#000;">VSBn</div>
<div class="r" style="left:241px;top:202px;width:1335px;height:17px;background:#e9e9e9"></div>
<div class="r" style="left:241px;top:202px;width:1335px;height:1px;background:linear-gradient(to right,#c4c4c4 50%,transparent 50%);background-size:2px 1px;background-position:0px 0"></div>
<div class="r" style="left:241px;top:219px;width:1335px;height:1px;background:linear-gradient(to right,#c4c4c4 50%,transparent 50%);background-size:2px 1px;background-position:0px 0"></div>
<div class="r" style="left:257px;top:203px;width:1px;height:16px;background:linear-gradient(#fff 50%,transparent 50%);background-size:1px 2px;background-position:0 0px"></div>
<div class="r" style="left:307px;top:203px;width:1px;height:16px;background:linear-gradient(#fff 50%,transparent 50%);background-size:1px 2px;background-position:0 0px"></div>
<div class="r" style="left:347px;top:203px;width:1px;height:16px;background:linear-gradient(#fff 50%,transparent 50%);background-size:1px 2px;background-position:0 0px"></div>
<div class="r" style="left:417px;top:203px;width:1px;height:16px;background:linear-gradient(#fff 50%,transparent 50%);background-size:1px 2px;background-position:0 0px"></div>
<div class="r" style="left:437px;top:203px;width:1px;height:16px;background:linear-gradient(#fff 50%,transparent 50%);background-size:1px 2px;background-position:0 0px"></div>
<div class="r" style="left:487px;top:203px;width:1px;height:16px;background:linear-gradient(#fff 50%,transparent 50%);background-size:1px 2px;background-position:0 0px"></div>
<div class="r" style="left:537px;top:203px;width:1px;height:16px;background:linear-gradient(#fff 50%,transparent 50%);background-size:1px 2px;background-position:0 0px"></div>
<div class="r" style="left:870px;top:203px;width:1px;height:16px;background:linear-gradient(#fff 50%,transparent 50%);background-size:1px 2px;background-position:0 0px"></div>
<div class="r" style="left:950px;top:203px;width:1px;height:16px;background:linear-gradient(#fff 50%,transparent 50%);background-size:1px 2px;background-position:0 0px"></div>
<div class="r" style="left:1030px;top:203px;width:1px;height:16px;background:linear-gradient(#fff 50%,transparent 50%);background-size:1px 2px;background-position:0 0px"></div>
<div class="r" style="left:1105px;top:203px;width:1px;height:16px;background:linear-gradient(#fff 50%,transparent 50%);background-size:1px 2px;background-position:0 0px"></div>
<div class="r" style="left:1180px;top:203px;width:1px;height:16px;background:linear-gradient(#fff 50%,transparent 50%);background-size:1px 2px;background-position:0 0px"></div>
<div class="t" style="left:259px;width:45px;text-align:right;top:205.69px;font-size:11px;line-height:13px;color:#000;">150</div>
<div class="t" style="left:347px;width:70px;text-align:center;top:204.99px;font-size:11px;line-height:14.4px;color:#000">13.08.2019</div>
<div class="t" style="left:421px;top:205.69px;font-size:11px;line-height:13px;color:#000;">V</div>
<div class="t" style="left:437px;width:50px;text-align:center;top:204.99px;font-size:11px;line-height:14.4px;color:#000">1022</div>
<div class="t" style="left:487px;width:50px;text-align:center;top:204.99px;font-size:11px;line-height:14.4px;color:#000">3200</div>
<div class="t" style="left:541px;top:205.69px;font-size:11px;line-height:13px;color:#000;">Document 003</div>
<div class="t" style="left:871px;width:76px;text-align:right;top:205.69px;font-size:11px;line-height:13px;color:#1a1aff;">400.00</div>
<div class="r" style="left:257px;top:220px;width:1px;height:16px;background:linear-gradient(#c4c4c4 50%,transparent 50%);background-size:1px 2px;background-position:0 0px"></div>
<div class="r" style="left:307px;top:220px;width:1px;height:16px;background:linear-gradient(#c4c4c4 50%,transparent 50%);background-size:1px 2px;background-position:0 0px"></div>
<div class="r" style="left:347px;top:220px;width:1px;height:16px;background:linear-gradient(#c4c4c4 50%,transparent 50%);background-size:1px 2px;background-position:0 0px"></div>
<div class="r" style="left:417px;top:220px;width:1px;height:16px;background:linear-gradient(#c4c4c4 50%,transparent 50%);background-size:1px 2px;background-position:0 0px"></div>
<div class="r" style="left:437px;top:220px;width:1px;height:16px;background:linear-gradient(#c4c4c4 50%,transparent 50%);background-size:1px 2px;background-position:0 0px"></div>
<div class="r" style="left:487px;top:220px;width:1px;height:16px;background:linear-gradient(#c4c4c4 50%,transparent 50%);background-size:1px 2px;background-position:0 0px"></div>
<div class="r" style="left:537px;top:220px;width:1px;height:16px;background:linear-gradient(#c4c4c4 50%,transparent 50%);background-size:1px 2px;background-position:0 0px"></div>
<div class="r" style="left:870px;top:220px;width:1px;height:16px;background:linear-gradient(#c4c4c4 50%,transparent 50%);background-size:1px 2px;background-position:0 0px"></div>
<div class="r" style="left:950px;top:220px;width:1px;height:16px;background:linear-gradient(#c4c4c4 50%,transparent 50%);background-size:1px 2px;background-position:0 0px"></div>
<div class="r" style="left:1030px;top:220px;width:1px;height:16px;background:linear-gradient(#c4c4c4 50%,transparent 50%);background-size:1px 2px;background-position:0 0px"></div>
<div class="r" style="left:1105px;top:220px;width:1px;height:16px;background:linear-gradient(#c4c4c4 50%,transparent 50%);background-size:1px 2px;background-position:0 0px"></div>
<div class="r" style="left:1180px;top:220px;width:1px;height:16px;background:linear-gradient(#c4c4c4 50%,transparent 50%);background-size:1px 2px;background-position:0 0px"></div>
<div class="t" style="left:437px;width:50px;text-align:center;top:221.99px;font-size:11px;line-height:14.4px;color:#000">3200</div>
<div class="t" style="left:487px;width:50px;text-align:center;top:221.99px;font-size:11px;line-height:14.4px;color:#000">1022</div>
<div class="t" style="left:541px;top:222.69px;font-size:11px;line-height:13px;color:#000;">Document 003</div>
<div class="t" style="left:951px;width:76px;text-align:right;top:222.69px;font-size:11px;line-height:13px;color:#1a1aff;">400.00</div>
<div class="t" style="left:1032px;width:70px;text-align:right;top:222.69px;font-size:11px;line-height:13px;color:#1a1aff;">28.60</div>
<div class="t" style="left:1109px;top:222.69px;font-size:11px;line-height:13px;color:#000;">UStn</div>
<div class="r" style="left:241px;top:236px;width:1335px;height:17px;background:#e9e9e9"></div>
<div class="r" style="left:241px;top:236px;width:1335px;height:1px;background:linear-gradient(to right,#c4c4c4 50%,transparent 50%);background-size:2px 1px;background-position:0px 0"></div>
<div class="r" style="left:241px;top:253px;width:1335px;height:1px;background:linear-gradient(to right,#c4c4c4 50%,transparent 50%);background-size:2px 1px;background-position:0px 0"></div>
<div class="r" style="left:257px;top:237px;width:1px;height:16px;background:linear-gradient(#fff 50%,transparent 50%);background-size:1px 2px;background-position:0 0px"></div>
<div class="r" style="left:307px;top:237px;width:1px;height:16px;background:linear-gradient(#fff 50%,transparent 50%);background-size:1px 2px;background-position:0 0px"></div>
<div class="r" style="left:347px;top:237px;width:1px;height:16px;background:linear-gradient(#fff 50%,transparent 50%);background-size:1px 2px;background-position:0 0px"></div>
<div class="r" style="left:417px;top:237px;width:1px;height:16px;background:linear-gradient(#fff 50%,transparent 50%);background-size:1px 2px;background-position:0 0px"></div>
<div class="r" style="left:437px;top:237px;width:1px;height:16px;background:linear-gradient(#fff 50%,transparent 50%);background-size:1px 2px;background-position:0 0px"></div>
<div class="r" style="left:487px;top:237px;width:1px;height:16px;background:linear-gradient(#fff 50%,transparent 50%);background-size:1px 2px;background-position:0 0px"></div>
<div class="r" style="left:537px;top:237px;width:1px;height:16px;background:linear-gradient(#fff 50%,transparent 50%);background-size:1px 2px;background-position:0 0px"></div>
<div class="r" style="left:870px;top:237px;width:1px;height:16px;background:linear-gradient(#fff 50%,transparent 50%);background-size:1px 2px;background-position:0 0px"></div>
<div class="r" style="left:950px;top:237px;width:1px;height:16px;background:linear-gradient(#fff 50%,transparent 50%);background-size:1px 2px;background-position:0 0px"></div>
<div class="r" style="left:1030px;top:237px;width:1px;height:16px;background:linear-gradient(#fff 50%,transparent 50%);background-size:1px 2px;background-position:0 0px"></div>
<div class="r" style="left:1105px;top:237px;width:1px;height:16px;background:linear-gradient(#fff 50%,transparent 50%);background-size:1px 2px;background-position:0 0px"></div>
<div class="r" style="left:1180px;top:237px;width:1px;height:16px;background:linear-gradient(#fff 50%,transparent 50%);background-size:1px 2px;background-position:0 0px"></div>
<svg style="left:241px;top:237px" width="17" height="17"><g transform="rotate(-45 9 9)"><rect x="3" y="6.3" width="12.5" height="5.4" rx="2.7" fill="none" stroke="#fff" stroke-width="3"/><rect x="3" y="6.3" width="12.5" height="5.4" rx="2.7" fill="#f4f4f4" stroke="#555" stroke-width="1.4"/><path d="M5.5 9 H12.5" stroke="#555" stroke-width="1.2"/></g></svg>
<div class="t" style="left:259px;width:45px;text-align:right;top:239.69px;font-size:11px;line-height:13px;color:#000;">149</div>
<div class="t" style="left:347px;width:70px;text-align:center;top:238.99px;font-size:11px;line-height:14.4px;color:#000">13.08.2019</div>
<div class="t" style="left:421px;top:239.69px;font-size:11px;line-height:13px;color:#000;">Q</div>
<div class="t" style="left:437px;width:50px;text-align:center;top:238.99px;font-size:11px;line-height:14.4px;color:#000">1022</div>
<div class="t" style="left:487px;width:50px;text-align:center;top:238.99px;font-size:11px;line-height:14.4px;color:#000">3200</div>
<div class="t" style="left:541px;top:239.69px;font-size:11px;line-height:13px;color:#000;">Docuemnt_011</div>
<div class="t" style="left:871px;width:76px;text-align:right;top:239.69px;font-size:11px;line-height:13px;color:#1a1aff;">110.00</div>
<div class="r" style="left:257px;top:254px;width:1px;height:16px;background:linear-gradient(#c4c4c4 50%,transparent 50%);background-size:1px 2px;background-position:0 0px"></div>
<div class="r" style="left:307px;top:254px;width:1px;height:16px;background:linear-gradient(#c4c4c4 50%,transparent 50%);background-size:1px 2px;background-position:0 0px"></div>
<div class="r" style="left:347px;top:254px;width:1px;height:16px;background:linear-gradient(#c4c4c4 50%,transparent 50%);background-size:1px 2px;background-position:0 0px"></div>
<div class="r" style="left:417px;top:254px;width:1px;height:16px;background:linear-gradient(#c4c4c4 50%,transparent 50%);background-size:1px 2px;background-position:0 0px"></div>
<div class="r" style="left:437px;top:254px;width:1px;height:16px;background:linear-gradient(#c4c4c4 50%,transparent 50%);background-size:1px 2px;background-position:0 0px"></div>
<div class="r" style="left:487px;top:254px;width:1px;height:16px;background:linear-gradient(#c4c4c4 50%,transparent 50%);background-size:1px 2px;background-position:0 0px"></div>
<div class="r" style="left:537px;top:254px;width:1px;height:16px;background:linear-gradient(#c4c4c4 50%,transparent 50%);background-size:1px 2px;background-position:0 0px"></div>
<div class="r" style="left:870px;top:254px;width:1px;height:16px;background:linear-gradient(#c4c4c4 50%,transparent 50%);background-size:1px 2px;background-position:0 0px"></div>
<div class="r" style="left:950px;top:254px;width:1px;height:16px;background:linear-gradient(#c4c4c4 50%,transparent 50%);background-size:1px 2px;background-position:0 0px"></div>
<div class="r" style="left:1030px;top:254px;width:1px;height:16px;background:linear-gradient(#c4c4c4 50%,transparent 50%);background-size:1px 2px;background-position:0 0px"></div>
<div class="r" style="left:1105px;top:254px;width:1px;height:16px;background:linear-gradient(#c4c4c4 50%,transparent 50%);background-size:1px 2px;background-position:0 0px"></div>
<div class="r" style="left:1180px;top:254px;width:1px;height:16px;background:linear-gradient(#c4c4c4 50%,transparent 50%);background-size:1px 2px;background-position:0 0px"></div>
<div class="t" style="left:437px;width:50px;text-align:center;top:255.99px;font-size:11px;line-height:14.4px;color:#000">3200</div>
<div class="t" style="left:487px;width:50px;text-align:center;top:255.99px;font-size:11px;line-height:14.4px;color:#000">1022</div>
<div class="t" style="left:541px;top:256.69px;font-size:11px;line-height:13px;color:#000;">Docuemnt_011</div>
<div class="t" style="left:951px;width:76px;text-align:right;top:256.69px;font-size:11px;line-height:13px;color:#1a1aff;">110.00</div>
<div class="t" style="left:1032px;width:70px;text-align:right;top:256.69px;font-size:11px;line-height:13px;color:#1a1aff;">7.86</div>
<div class="t" style="left:1109px;top:256.69px;font-size:11px;line-height:13px;color:#000;">UStn</div>
<div class="r" style="left:241px;top:270px;width:1335px;height:17px;background:#e9e9e9"></div>
<div class="r" style="left:241px;top:270px;width:1335px;height:1px;background:linear-gradient(to right,#c4c4c4 50%,transparent 50%);background-size:2px 1px;background-position:0px 0"></div>
<div class="r" style="left:241px;top:287px;width:1335px;height:1px;background:linear-gradient(to right,#c4c4c4 50%,transparent 50%);background-size:2px 1px;background-position:0px 0"></div>
<div class="r" style="left:257px;top:271px;width:1px;height:16px;background:linear-gradient(#fff 50%,transparent 50%);background-size:1px 2px;background-position:0 0px"></div>
<div class="r" style="left:307px;top:271px;width:1px;height:16px;background:linear-gradient(#fff 50%,transparent 50%);background-size:1px 2px;background-position:0 0px"></div>
<div class="r" style="left:347px;top:271px;width:1px;height:16px;background:linear-gradient(#fff 50%,transparent 50%);background-size:1px 2px;background-position:0 0px"></div>
<div class="r" style="left:417px;top:271px;width:1px;height:16px;background:linear-gradient(#fff 50%,transparent 50%);background-size:1px 2px;background-position:0 0px"></div>
<div class="r" style="left:437px;top:271px;width:1px;height:16px;background:linear-gradient(#fff 50%,transparent 50%);background-size:1px 2px;background-position:0 0px"></div>
<div class="r" style="left:487px;top:271px;width:1px;height:16px;background:linear-gradient(#fff 50%,transparent 50%);background-size:1px 2px;background-position:0 0px"></div>
<div class="r" style="left:537px;top:271px;width:1px;height:16px;background:linear-gradient(#fff 50%,transparent 50%);background-size:1px 2px;background-position:0 0px"></div>
<div class="r" style="left:870px;top:271px;width:1px;height:16px;background:linear-gradient(#fff 50%,transparent 50%);background-size:1px 2px;background-position:0 0px"></div>
<div class="r" style="left:950px;top:271px;width:1px;height:16px;background:linear-gradient(#fff 50%,transparent 50%);background-size:1px 2px;background-position:0 0px"></div>
<div class="r" style="left:1030px;top:271px;width:1px;height:16px;background:linear-gradient(#fff 50%,transparent 50%);background-size:1px 2px;background-position:0 0px"></div>
<div class="r" style="left:1105px;top:271px;width:1px;height:16px;background:linear-gradient(#fff 50%,transparent 50%);background-size:1px 2px;background-position:0 0px"></div>
<div class="r" style="left:1180px;top:271px;width:1px;height:16px;background:linear-gradient(#fff 50%,transparent 50%);background-size:1px 2px;background-position:0 0px"></div>
<div class="t" style="left:259px;width:45px;text-align:right;top:273.69px;font-size:11px;line-height:13px;color:#000;">146</div>
<div class="t" style="left:308px;width:36px;text-align:right;top:273.69px;font-size:11px;line-height:13px;color:#000;">20187</div>
<div class="t" style="left:347px;width:70px;text-align:center;top:272.99px;font-size:11px;line-height:14.4px;color:#000">01.01.2019</div>
<div class="t" style="left:437px;width:50px;text-align:center;top:272.99px;font-size:11px;line-height:14.4px;color:#000">2000</div>
<div class="t" style="left:487px;width:50px;text-align:center;top:272.99px;font-size:11px;line-height:14.4px;color:#000">6000</div>
<div class="t" style="left:541px;top:273.69px;font-size:11px;line-height:13px;color:#000;">Swisscom AG / 20178</div>
<div class="t" style="left:951px;width:76px;text-align:right;top:273.69px;font-size:11px;line-height:13px;color:#1a1aff;">40.00</div>
<div class="r" style="left:257px;top:288px;width:1px;height:16px;background:linear-gradient(#c4c4c4 50%,transparent 50%);background-size:1px 2px;background-position:0 0px"></div>
<div class="r" style="left:307px;top:288px;width:1px;height:16px;background:linear-gradient(#c4c4c4 50%,transparent 50%);background-size:1px 2px;background-position:0 0px"></div>
<div class="r" style="left:347px;top:288px;width:1px;height:16px;background:linear-gradient(#c4c4c4 50%,transparent 50%);background-size:1px 2px;background-position:0 0px"></div>
<div class="r" style="left:417px;top:288px;width:1px;height:16px;background:linear-gradient(#c4c4c4 50%,transparent 50%);background-size:1px 2px;background-position:0 0px"></div>
<div class="r" style="left:437px;top:288px;width:1px;height:16px;background:linear-gradient(#c4c4c4 50%,transparent 50%);background-size:1px 2px;background-position:0 0px"></div>
<div class="r" style="left:487px;top:288px;width:1px;height:16px;background:linear-gradient(#c4c4c4 50%,transparent 50%);background-size:1px 2px;background-position:0 0px"></div>
<div class="r" style="left:537px;top:288px;width:1px;height:16px;background:linear-gradient(#c4c4c4 50%,transparent 50%);background-size:1px 2px;background-position:0 0px"></div>
<div class="r" style="left:870px;top:288px;width:1px;height:16px;background:linear-gradient(#c4c4c4 50%,transparent 50%);background-size:1px 2px;background-position:0 0px"></div>
<div class="r" style="left:950px;top:288px;width:1px;height:16px;background:linear-gradient(#c4c4c4 50%,transparent 50%);background-size:1px 2px;background-position:0 0px"></div>
<div class="r" style="left:1030px;top:288px;width:1px;height:16px;background:linear-gradient(#c4c4c4 50%,transparent 50%);background-size:1px 2px;background-position:0 0px"></div>
<div class="r" style="left:1105px;top:288px;width:1px;height:16px;background:linear-gradient(#c4c4c4 50%,transparent 50%);background-size:1px 2px;background-position:0 0px"></div>
<div class="r" style="left:1180px;top:288px;width:1px;height:16px;background:linear-gradient(#c4c4c4 50%,transparent 50%);background-size:1px 2px;background-position:0 0px"></div>
<div class="t" style="left:308px;width:36px;text-align:right;top:290.69px;font-size:11px;line-height:13px;color:#000;">20187</div>
<div class="t" style="left:437px;width:50px;text-align:center;top:289.99px;font-size:11px;line-height:14.4px;color:#000">6000</div>
<div class="t" style="left:487px;width:50px;text-align:center;top:289.99px;font-size:11px;line-height:14.4px;color:#000">2000</div>
<div class="t" style="left:541px;top:290.69px;font-size:11px;line-height:13px;color:#000;">Swisscom AG / 20178</div>
<div class="t" style="left:871px;width:76px;text-align:right;top:290.69px;font-size:11px;line-height:13px;color:#1a1aff;">40.00</div>
<div class="r" style="left:241px;top:304px;width:1335px;height:17px;background:#e9e9e9"></div>
<div class="r" style="left:241px;top:304px;width:1335px;height:1px;background:linear-gradient(to right,#c4c4c4 50%,transparent 50%);background-size:2px 1px;background-position:0px 0"></div>
<div class="r" style="left:241px;top:321px;width:1335px;height:1px;background:linear-gradient(to right,#c4c4c4 50%,transparent 50%);background-size:2px 1px;background-position:0px 0"></div>
<div class="r" style="left:257px;top:305px;width:1px;height:16px;background:linear-gradient(#fff 50%,transparent 50%);background-size:1px 2px;background-position:0 0px"></div>
<div class="r" style="left:307px;top:305px;width:1px;height:16px;background:linear-gradient(#fff 50%,transparent 50%);background-size:1px 2px;background-position:0 0px"></div>
<div class="r" style="left:347px;top:305px;width:1px;height:16px;background:linear-gradient(#fff 50%,transparent 50%);background-size:1px 2px;background-position:0 0px"></div>
<div class="r" style="left:417px;top:305px;width:1px;height:16px;background:linear-gradient(#fff 50%,transparent 50%);background-size:1px 2px;background-position:0 0px"></div>
<div class="r" style="left:437px;top:305px;width:1px;height:16px;background:linear-gradient(#fff 50%,transparent 50%);background-size:1px 2px;background-position:0 0px"></div>
<div class="r" style="left:487px;top:305px;width:1px;height:16px;background:linear-gradient(#fff 50%,transparent 50%);background-size:1px 2px;background-position:0 0px"></div>
<div class="r" style="left:537px;top:305px;width:1px;height:16px;background:linear-gradient(#fff 50%,transparent 50%);background-size:1px 2px;background-position:0 0px"></div>
<div class="r" style="left:870px;top:305px;width:1px;height:16px;background:linear-gradient(#fff 50%,transparent 50%);background-size:1px 2px;background-position:0 0px"></div>
<div class="r" style="left:950px;top:305px;width:1px;height:16px;background:linear-gradient(#fff 50%,transparent 50%);background-size:1px 2px;background-position:0 0px"></div>
<div class="r" style="left:1030px;top:305px;width:1px;height:16px;background:linear-gradient(#fff 50%,transparent 50%);background-size:1px 2px;background-position:0 0px"></div>
<div class="r" style="left:1105px;top:305px;width:1px;height:16px;background:linear-gradient(#fff 50%,transparent 50%);background-size:1px 2px;background-position:0 0px"></div>
<div class="r" style="left:1180px;top:305px;width:1px;height:16px;background:linear-gradient(#fff 50%,transparent 50%);background-size:1px 2px;background-position:0 0px"></div>
<div class="t" style="left:259px;width:45px;text-align:right;top:307.69px;font-size:11px;line-height:13px;color:#000;">135</div>
<div class="t" style="left:347px;width:70px;text-align:center;top:306.99px;font-size:11px;line-height:14.4px;color:#000">04.04.2019</div>
<div class="t" style="left:437px;width:50px;text-align:center;top:306.99px;font-size:11px;line-height:14.4px;color:#000">1000</div>
<div class="t" style="left:487px;width:50px;text-align:center;top:306.99px;font-size:11px;line-height:14.4px;color:#000">1513</div>
<div class="t" style="left:541px;top:307.69px;font-size:11px;line-height:13px;color:#000;">Telefon1</div>
<div class="t" style="left:951px;width:76px;text-align:right;top:307.69px;font-size:11px;line-height:13px;color:#1a1aff;">115.00</div>
<div class="r" style="left:257px;top:322px;width:1px;height:16px;background:linear-gradient(#c4c4c4 50%,transparent 50%);background-size:1px 2px;background-position:0 0px"></div>
<div class="r" style="left:307px;top:322px;width:1px;height:16px;background:linear-gradient(#c4c4c4 50%,transparent 50%);background-size:1px 2px;background-position:0 0px"></div>
<div class="r" style="left:347px;top:322px;width:1px;height:16px;background:linear-gradient(#c4c4c4 50%,transparent 50%);background-size:1px 2px;background-position:0 0px"></div>
<div class="r" style="left:417px;top:322px;width:1px;height:16px;background:linear-gradient(#c4c4c4 50%,transparent 50%);background-size:1px 2px;background-position:0 0px"></div>
<div class="r" style="left:437px;top:322px;width:1px;height:16px;background:linear-gradient(#c4c4c4 50%,transparent 50%);background-size:1px 2px;background-position:0 0px"></div>
<div class="r" style="left:487px;top:322px;width:1px;height:16px;background:linear-gradient(#c4c4c4 50%,transparent 50%);background-size:1px 2px;background-position:0 0px"></div>
<div class="r" style="left:537px;top:322px;width:1px;height:16px;background:linear-gradient(#c4c4c4 50%,transparent 50%);background-size:1px 2px;background-position:0 0px"></div>
<div class="r" style="left:870px;top:322px;width:1px;height:16px;background:linear-gradient(#c4c4c4 50%,transparent 50%);background-size:1px 2px;background-position:0 0px"></div>
<div class="r" style="left:950px;top:322px;width:1px;height:16px;background:linear-gradient(#c4c4c4 50%,transparent 50%);background-size:1px 2px;background-position:0 0px"></div>
<div class="r" style="left:1030px;top:322px;width:1px;height:16px;background:linear-gradient(#c4c4c4 50%,transparent 50%);background-size:1px 2px;background-position:0 0px"></div>
<div class="r" style="left:1105px;top:322px;width:1px;height:16px;background:linear-gradient(#c4c4c4 50%,transparent 50%);background-size:1px 2px;background-position:0 0px"></div>
<div class="r" style="left:1180px;top:322px;width:1px;height:16px;background:linear-gradient(#c4c4c4 50%,transparent 50%);background-size:1px 2px;background-position:0 0px"></div>
<div class="t" style="left:437px;width:50px;text-align:center;top:323.99px;font-size:11px;line-height:14.4px;color:#000">1513</div>
<div class="t" style="left:487px;width:50px;text-align:center;top:323.99px;font-size:11px;line-height:14.4px;color:#000">1000</div>
<div class="t" style="left:541px;top:324.69px;font-size:11px;line-height:13px;color:#000;">Telefon1</div>
<div class="t" style="left:871px;width:76px;text-align:right;top:324.69px;font-size:11px;line-height:13px;color:#1a1aff;">115.00</div>
<div class="t" style="left:1032px;width:70px;text-align:right;top:324.69px;font-size:11px;line-height:13px;color:#1a1aff;">8.22</div>
<div class="t" style="left:1109px;top:324.69px;font-size:11px;line-height:13px;color:#000;">VSBn</div>
<div class="r" style="left:241px;top:338px;width:1335px;height:17px;background:#e9e9e9"></div>
<div class="r" style="left:241px;top:338px;width:1335px;height:1px;background:linear-gradient(to right,#c4c4c4 50%,transparent 50%);background-size:2px 1px;background-position:0px 0"></div>
<div class="r" style="left:241px;top:355px;width:1335px;height:1px;background:linear-gradient(to right,#c4c4c4 50%,transparent 50%);background-size:2px 1px;background-position:0px 0"></div>
<div class="r" style="left:257px;top:339px;width:1px;height:16px;background:linear-gradient(#fff 50%,transparent 50%);background-size:1px 2px;background-position:0 0px"></div>
<div class="r" style="left:307px;top:339px;width:1px;height:16px;background:linear-gradient(#fff 50%,transparent 50%);background-size:1px 2px;background-position:0 0px"></div>
<div class="r" style="left:347px;top:339px;width:1px;height:16px;background:linear-gradient(#fff 50%,transparent 50%);background-size:1px 2px;background-position:0 0px"></div>
<div class="r" style="left:417px;top:339px;width:1px;height:16px;background:linear-gradient(#fff 50%,transparent 50%);background-size:1px 2px;background-position:0 0px"></div>
<div class="r" style="left:437px;top:339px;width:1px;height:16px;background:linear-gradient(#fff 50%,transparent 50%);background-size:1px 2px;background-position:0 0px"></div>
<div class="r" style="left:487px;top:339px;width:1px;height:16px;background:linear-gradient(#fff 50%,transparent 50%);background-size:1px 2px;background-position:0 0px"></div>
<div class="r" style="left:537px;top:339px;width:1px;height:16px;background:linear-gradient(#fff 50%,transparent 50%);background-size:1px 2px;background-position:0 0px"></div>
<div class="r" style="left:870px;top:339px;width:1px;height:16px;background:linear-gradient(#fff 50%,transparent 50%);background-size:1px 2px;background-position:0 0px"></div>
<div class="r" style="left:950px;top:339px;width:1px;height:16px;background:linear-gradient(#fff 50%,transparent 50%);background-size:1px 2px;background-position:0 0px"></div>
<div class="r" style="left:1030px;top:339px;width:1px;height:16px;background:linear-gradient(#fff 50%,transparent 50%);background-size:1px 2px;background-position:0 0px"></div>
<div class="r" style="left:1105px;top:339px;width:1px;height:16px;background:linear-gradient(#fff 50%,transparent 50%);background-size:1px 2px;background-position:0 0px"></div>
<div class="r" style="left:1180px;top:339px;width:1px;height:16px;background:linear-gradient(#fff 50%,transparent 50%);background-size:1px 2px;background-position:0 0px"></div>
<div class="t" style="left:259px;width:45px;text-align:right;top:341.69px;font-size:11px;line-height:13px;color:#000;">138</div>
<div class="t" style="left:347px;width:70px;text-align:center;top:340.99px;font-size:11px;line-height:14.4px;color:#000">05.08.2019</div>
<div class="t" style="left:437px;width:50px;text-align:center;top:340.99px;font-size:11px;line-height:14.4px;color:#000">1021</div>
<div class="t" style="left:487px;width:50px;text-align:center;top:340.99px;font-size:11px;line-height:14.4px;color:#000">3200</div>
<div class="t" style="left:871px;width:76px;text-align:right;top:341.69px;font-size:11px;line-height:13px;color:#1a1aff;">340.00</div>
<div class="r" style="left:257px;top:356px;width:1px;height:16px;background:linear-gradient(#c4c4c4 50%,transparent 50%);background-size:1px 2px;background-position:0 0px"></div>
<div class="r" style="left:307px;top:356px;width:1px;height:16px;background:linear-gradient(#c4c4c4 50%,transparent 50%);background-size:1px 2px;background-position:0 0px"></div>
<div class="r" style="left:347px;top:356px;width:1px;height:16px;background:linear-gradient(#c4c4c4 50%,transparent 50%);background-size:1px 2px;background-position:0 0px"></div>
<div class="r" style="left:417px;top:356px;width:1px;height:16px;background:linear-gradient(#c4c4c4 50%,transparent 50%);background-size:1px 2px;background-position:0 0px"></div>
<div class="r" style="left:437px;top:356px;width:1px;height:16px;background:linear-gradient(#c4c4c4 50%,transparent 50%);background-size:1px 2px;background-position:0 0px"></div>
<div class="r" style="left:487px;top:356px;width:1px;height:16px;background:linear-gradient(#c4c4c4 50%,transparent 50%);background-size:1px 2px;background-position:0 0px"></div>
<div class="r" style="left:537px;top:356px;width:1px;height:16px;background:linear-gradient(#c4c4c4 50%,transparent 50%);background-size:1px 2px;background-position:0 0px"></div>
<div class="r" style="left:870px;top:356px;width:1px;height:16px;background:linear-gradient(#c4c4c4 50%,transparent 50%);background-size:1px 2px;background-position:0 0px"></div>
<div class="r" style="left:950px;top:356px;width:1px;height:16px;background:linear-gradient(#c4c4c4 50%,transparent 50%);background-size:1px 2px;background-position:0 0px"></div>
<div class="r" style="left:1030px;top:356px;width:1px;height:16px;background:linear-gradient(#c4c4c4 50%,transparent 50%);background-size:1px 2px;background-position:0 0px"></div>
<div class="r" style="left:1105px;top:356px;width:1px;height:16px;background:linear-gradient(#c4c4c4 50%,transparent 50%);background-size:1px 2px;background-position:0 0px"></div>
<div class="r" style="left:1180px;top:356px;width:1px;height:16px;background:linear-gradient(#c4c4c4 50%,transparent 50%);background-size:1px 2px;background-position:0 0px"></div>
<div class="t" style="left:437px;width:50px;text-align:center;top:357.99px;font-size:11px;line-height:14.4px;color:#000">3200</div>
<div class="t" style="left:487px;width:50px;text-align:center;top:357.99px;font-size:11px;line-height:14.4px;color:#000">1021</div>
<div class="t" style="left:951px;width:76px;text-align:right;top:358.69px;font-size:11px;line-height:13px;color:#1a1aff;">340.00</div>
<div class="t" style="left:1032px;width:70px;text-align:right;top:358.69px;font-size:11px;line-height:13px;color:#1a1aff;">24.31</div>
<div class="t" style="left:1109px;top:358.69px;font-size:11px;line-height:13px;color:#000;">UStn</div>
<div class="r" style="left:241px;top:372px;width:1335px;height:17px;background:#e9e9e9"></div>
<div class="r" style="left:241px;top:372px;width:1335px;height:1px;background:linear-gradient(to right,#c4c4c4 50%,transparent 50%);background-size:2px 1px;background-position:0px 0"></div>
<div class="r" style="left:241px;top:389px;width:1335px;height:1px;background:linear-gradient(to right,#c4c4c4 50%,transparent 50%);background-size:2px 1px;background-position:0px 0"></div>
<div class="r" style="left:257px;top:373px;width:1px;height:16px;background:linear-gradient(#fff 50%,transparent 50%);background-size:1px 2px;background-position:0 0px"></div>
<div class="r" style="left:307px;top:373px;width:1px;height:16px;background:linear-gradient(#fff 50%,transparent 50%);background-size:1px 2px;background-position:0 0px"></div>
<div class="r" style="left:347px;top:373px;width:1px;height:16px;background:linear-gradient(#fff 50%,transparent 50%);background-size:1px 2px;background-position:0 0px"></div>
<div class="r" style="left:417px;top:373px;width:1px;height:16px;background:linear-gradient(#fff 50%,transparent 50%);background-size:1px 2px;background-position:0 0px"></div>
<div class="r" style="left:437px;top:373px;width:1px;height:16px;background:linear-gradient(#fff 50%,transparent 50%);background-size:1px 2px;background-position:0 0px"></div>
<div class="r" style="left:487px;top:373px;width:1px;height:16px;background:linear-gradient(#fff 50%,transparent 50%);background-size:1px 2px;background-position:0 0px"></div>
<div class="r" style="left:537px;top:373px;width:1px;height:16px;background:linear-gradient(#fff 50%,transparent 50%);background-size:1px 2px;background-position:0 0px"></div>
<div class="r" style="left:870px;top:373px;width:1px;height:16px;background:linear-gradient(#fff 50%,transparent 50%);background-size:1px 2px;background-position:0 0px"></div>
<div class="r" style="left:950px;top:373px;width:1px;height:16px;background:linear-gradient(#fff 50%,transparent 50%);background-size:1px 2px;background-position:0 0px"></div>
<div class="r" style="left:1030px;top:373px;width:1px;height:16px;background:linear-gradient(#fff 50%,transparent 50%);background-size:1px 2px;background-position:0 0px"></div>
<div class="r" style="left:1105px;top:373px;width:1px;height:16px;background:linear-gradient(#fff 50%,transparent 50%);background-size:1px 2px;background-position:0 0px"></div>
<div class="r" style="left:1180px;top:373px;width:1px;height:16px;background:linear-gradient(#fff 50%,transparent 50%);background-size:1px 2px;background-position:0 0px"></div>
<div class="t" style="left:259px;width:45px;text-align:right;top:375.69px;font-size:11px;line-height:13px;color:#000;">137</div>
<div class="t" style="left:347px;width:70px;text-align:center;top:374.99px;font-size:11px;line-height:14.4px;color:#000">05.08.2019</div>
<div class="t" style="left:437px;width:50px;text-align:center;top:374.99px;font-size:11px;line-height:14.4px;color:#000">1022</div>
<div class="t" style="left:487px;width:50px;text-align:center;top:374.99px;font-size:11px;line-height:14.4px;color:#000">3200</div>
<div class="t" style="left:871px;width:76px;text-align:right;top:375.69px;font-size:11px;line-height:13px;color:#1a1aff;">340.00</div>
<div class="r" style="left:257px;top:390px;width:1px;height:16px;background:linear-gradient(#c4c4c4 50%,transparent 50%);background-size:1px 2px;background-position:0 0px"></div>
<div class="r" style="left:307px;top:390px;width:1px;height:16px;background:linear-gradient(#c4c4c4 50%,transparent 50%);background-size:1px 2px;background-position:0 0px"></div>
<div class="r" style="left:347px;top:390px;width:1px;height:16px;background:linear-gradient(#c4c4c4 50%,transparent 50%);background-size:1px 2px;background-position:0 0px"></div>
<div class="r" style="left:417px;top:390px;width:1px;height:16px;background:linear-gradient(#c4c4c4 50%,transparent 50%);background-size:1px 2px;background-position:0 0px"></div>
<div class="r" style="left:437px;top:390px;width:1px;height:16px;background:linear-gradient(#c4c4c4 50%,transparent 50%);background-size:1px 2px;background-position:0 0px"></div>
<div class="r" style="left:487px;top:390px;width:1px;height:16px;background:linear-gradient(#c4c4c4 50%,transparent 50%);background-size:1px 2px;background-position:0 0px"></div>
<div class="r" style="left:537px;top:390px;width:1px;height:16px;background:linear-gradient(#c4c4c4 50%,transparent 50%);background-size:1px 2px;background-position:0 0px"></div>
<div class="r" style="left:870px;top:390px;width:1px;height:16px;background:linear-gradient(#c4c4c4 50%,transparent 50%);background-size:1px 2px;background-position:0 0px"></div>
<div class="r" style="left:950px;top:390px;width:1px;height:16px;background:linear-gradient(#c4c4c4 50%,transparent 50%);background-size:1px 2px;background-position:0 0px"></div>
<div class="r" style="left:1030px;top:390px;width:1px;height:16px;background:linear-gradient(#c4c4c4 50%,transparent 50%);background-size:1px 2px;background-position:0 0px"></div>
<div class="r" style="left:1105px;top:390px;width:1px;height:16px;background:linear-gradient(#c4c4c4 50%,transparent 50%);background-size:1px 2px;background-position:0 0px"></div>
<div class="r" style="left:1180px;top:390px;width:1px;height:16px;background:linear-gradient(#c4c4c4 50%,transparent 50%);background-size:1px 2px;background-position:0 0px"></div>
<div class="t" style="left:437px;width:50px;text-align:center;top:391.99px;font-size:11px;line-height:14.4px;color:#000">3200</div>
<div class="t" style="left:487px;width:50px;text-align:center;top:391.99px;font-size:11px;line-height:14.4px;color:#000">1022</div>
<div class="t" style="left:951px;width:76px;text-align:right;top:392.69px;font-size:11px;line-height:13px;color:#1a1aff;">340.00</div>
<div class="t" style="left:1032px;width:70px;text-align:right;top:392.69px;font-size:11px;line-height:13px;color:#1a1aff;">24.31</div>
<div class="t" style="left:1109px;top:392.69px;font-size:11px;line-height:13px;color:#000;">UStn</div>
<div class="r" style="left:241px;top:406px;width:1335px;height:17px;background:#e9e9e9"></div>
<div class="r" style="left:241px;top:406px;width:1335px;height:1px;background:linear-gradient(to right,#c4c4c4 50%,transparent 50%);background-size:2px 1px;background-position:0px 0"></div>
<div class="r" style="left:241px;top:423px;width:1335px;height:1px;background:linear-gradient(to right,#c4c4c4 50%,transparent 50%);background-size:2px 1px;background-position:0px 0"></div>
<div class="r" style="left:257px;top:407px;width:1px;height:16px;background:linear-gradient(#fff 50%,transparent 50%);background-size:1px 2px;background-position:0 0px"></div>
<div class="r" style="left:307px;top:407px;width:1px;height:16px;background:linear-gradient(#fff 50%,transparent 50%);background-size:1px 2px;background-position:0 0px"></div>
<div class="r" style="left:347px;top:407px;width:1px;height:16px;background:linear-gradient(#fff 50%,transparent 50%);background-size:1px 2px;background-position:0 0px"></div>
<div class="r" style="left:417px;top:407px;width:1px;height:16px;background:linear-gradient(#fff 50%,transparent 50%);background-size:1px 2px;background-position:0 0px"></div>
<div class="r" style="left:437px;top:407px;width:1px;height:16px;background:linear-gradient(#fff 50%,transparent 50%);background-size:1px 2px;background-position:0 0px"></div>
<div class="r" style="left:487px;top:407px;width:1px;height:16px;background:linear-gradient(#fff 50%,transparent 50%);background-size:1px 2px;background-position:0 0px"></div>
<div class="r" style="left:537px;top:407px;width:1px;height:16px;background:linear-gradient(#fff 50%,transparent 50%);background-size:1px 2px;background-position:0 0px"></div>
<div class="r" style="left:870px;top:407px;width:1px;height:16px;background:linear-gradient(#fff 50%,transparent 50%);background-size:1px 2px;background-position:0 0px"></div>
<div class="r" style="left:950px;top:407px;width:1px;height:16px;background:linear-gradient(#fff 50%,transparent 50%);background-size:1px 2px;background-position:0 0px"></div>
<div class="r" style="left:1030px;top:407px;width:1px;height:16px;background:linear-gradient(#fff 50%,transparent 50%);background-size:1px 2px;background-position:0 0px"></div>
<div class="r" style="left:1105px;top:407px;width:1px;height:16px;background:linear-gradient(#fff 50%,transparent 50%);background-size:1px 2px;background-position:0 0px"></div>
<div class="r" style="left:1180px;top:407px;width:1px;height:16px;background:linear-gradient(#fff 50%,transparent 50%);background-size:1px 2px;background-position:0 0px"></div>
<div class="t" style="left:259px;width:45px;text-align:right;top:409.69px;font-size:11px;line-height:13px;color:#000;">136</div>
<div class="t" style="left:347px;width:70px;text-align:center;top:408.99px;font-size:11px;line-height:14.4px;color:#000">05.04.2019</div>
<div class="t" style="left:437px;width:50px;text-align:center;top:408.99px;font-size:11px;line-height:14.4px;color:#000">1000</div>
<div class="t" style="left:487px;width:50px;text-align:center;top:408.99px;font-size:11px;line-height:14.4px;color:#000">1210</div>
<div class="t" style="left:541px;top:409.69px;font-size:11px;line-height:13px;color:#000;">Computer</div>
<div class="t" style="left:951px;width:76px;text-align:right;top:409.69px;font-size:11px;line-height:13px;color:#1a1aff;">1&#39;400.00</div>
<div class="r" style="left:257px;top:424px;width:1px;height:16px;background:linear-gradient(#c4c4c4 50%,transparent 50%);background-size:1px 2px;background-position:0 0px"></div>
<div class="r" style="left:307px;top:424px;width:1px;height:16px;background:linear-gradient(#c4c4c4 50%,transparent 50%);background-size:1px 2px;background-position:0 0px"></div>
<div class="r" style="left:347px;top:424px;width:1px;height:16px;background:linear-gradient(#c4c4c4 50%,transparent 50%);background-size:1px 2px;background-position:0 0px"></div>
<div class="r" style="left:417px;top:424px;width:1px;height:16px;background:linear-gradient(#c4c4c4 50%,transparent 50%);background-size:1px 2px;background-position:0 0px"></div>
<div class="r" style="left:437px;top:424px;width:1px;height:16px;background:linear-gradient(#c4c4c4 50%,transparent 50%);background-size:1px 2px;background-position:0 0px"></div>
<div class="r" style="left:487px;top:424px;width:1px;height:16px;background:linear-gradient(#c4c4c4 50%,transparent 50%);background-size:1px 2px;background-position:0 0px"></div>
<div class="r" style="left:537px;top:424px;width:1px;height:16px;background:linear-gradient(#c4c4c4 50%,transparent 50%);background-size:1px 2px;background-position:0 0px"></div>
<div class="r" style="left:870px;top:424px;width:1px;height:16px;background:linear-gradient(#c4c4c4 50%,transparent 50%);background-size:1px 2px;background-position:0 0px"></div>
<div class="r" style="left:950px;top:424px;width:1px;height:16px;background:linear-gradient(#c4c4c4 50%,transparent 50%);background-size:1px 2px;background-position:0 0px"></div>
<div class="r" style="left:1030px;top:424px;width:1px;height:16px;background:linear-gradient(#c4c4c4 50%,transparent 50%);background-size:1px 2px;background-position:0 0px"></div>
<div class="r" style="left:1105px;top:424px;width:1px;height:16px;background:linear-gradient(#c4c4c4 50%,transparent 50%);background-size:1px 2px;background-position:0 0px"></div>
<div class="r" style="left:1180px;top:424px;width:1px;height:16px;background:linear-gradient(#c4c4c4 50%,transparent 50%);background-size:1px 2px;background-position:0 0px"></div>
<div class="t" style="left:437px;width:50px;text-align:center;top:425.99px;font-size:11px;line-height:14.4px;color:#000">1210</div>
<div class="t" style="left:487px;width:50px;text-align:center;top:425.99px;font-size:11px;line-height:14.4px;color:#000">1000</div>
<div class="t" style="left:541px;top:426.69px;font-size:11px;line-height:13px;color:#000;">Computer</div>
<div class="t" style="left:871px;width:76px;text-align:right;top:426.69px;font-size:11px;line-height:13px;color:#1a1aff;">1&#39;400.00</div>
<div class="t" style="left:1032px;width:70px;text-align:right;top:426.69px;font-size:11px;line-height:13px;color:#1a1aff;">100.09</div>
<div class="t" style="left:1109px;top:426.69px;font-size:11px;line-height:13px;color:#000;">VSBn</div>
<div class="r" style="left:241px;top:440px;width:1335px;height:17px;background:#e9e9e9"></div>
<div class="r" style="left:241px;top:440px;width:1335px;height:1px;background:linear-gradient(to right,#c4c4c4 50%,transparent 50%);background-size:2px 1px;background-position:0px 0"></div>
<div class="r" style="left:241px;top:457px;width:1335px;height:1px;background:linear-gradient(to right,#c4c4c4 50%,transparent 50%);background-size:2px 1px;background-position:0px 0"></div>
<div class="r" style="left:257px;top:441px;width:1px;height:16px;background:linear-gradient(#fff 50%,transparent 50%);background-size:1px 2px;background-position:0 0px"></div>
<div class="r" style="left:307px;top:441px;width:1px;height:16px;background:linear-gradient(#fff 50%,transparent 50%);background-size:1px 2px;background-position:0 0px"></div>
<div class="r" style="left:347px;top:441px;width:1px;height:16px;background:linear-gradient(#fff 50%,transparent 50%);background-size:1px 2px;background-position:0 0px"></div>
<div class="r" style="left:417px;top:441px;width:1px;height:16px;background:linear-gradient(#fff 50%,transparent 50%);background-size:1px 2px;background-position:0 0px"></div>
<div class="r" style="left:437px;top:441px;width:1px;height:16px;background:linear-gradient(#fff 50%,transparent 50%);background-size:1px 2px;background-position:0 0px"></div>
<div class="r" style="left:487px;top:441px;width:1px;height:16px;background:linear-gradient(#fff 50%,transparent 50%);background-size:1px 2px;background-position:0 0px"></div>
<div class="r" style="left:537px;top:441px;width:1px;height:16px;background:linear-gradient(#fff 50%,transparent 50%);background-size:1px 2px;background-position:0 0px"></div>
<div class="r" style="left:870px;top:441px;width:1px;height:16px;background:linear-gradient(#fff 50%,transparent 50%);background-size:1px 2px;background-position:0 0px"></div>
<div class="r" style="left:950px;top:441px;width:1px;height:16px;background:linear-gradient(#fff 50%,transparent 50%);background-size:1px 2px;background-position:0 0px"></div>
<div class="r" style="left:1030px;top:441px;width:1px;height:16px;background:linear-gradient(#fff 50%,transparent 50%);background-size:1px 2px;background-position:0 0px"></div>
<div class="r" style="left:1105px;top:441px;width:1px;height:16px;background:linear-gradient(#fff 50%,transparent 50%);background-size:1px 2px;background-position:0 0px"></div>
<div class="r" style="left:1180px;top:441px;width:1px;height:16px;background:linear-gradient(#fff 50%,transparent 50%);background-size:1px 2px;background-position:0 0px"></div>
<div class="t" style="left:259px;width:45px;text-align:right;top:443.69px;font-size:11px;line-height:13px;color:#000;">134</div>
<div class="t" style="left:347px;width:70px;text-align:center;top:442.99px;font-size:11px;line-height:14.4px;color:#000">02.04.2019</div>
<div class="t" style="left:437px;width:50px;text-align:center;top:442.99px;font-size:11px;line-height:14.4px;color:#000">1000</div>
<div class="t" style="left:487px;width:50px;text-align:center;top:442.99px;font-size:11px;line-height:14.4px;color:#000">1530</div>
<div class="t" style="left:541px;top:443.69px;font-size:11px;line-height:13px;color:#000;">Gas</div>
<div class="t" style="left:951px;width:76px;text-align:right;top:443.69px;font-size:11px;line-height:13px;color:#1a1aff;">61.30</div>
<div class="r" style="left:257px;top:458px;width:1px;height:16px;background:linear-gradient(#c4c4c4 50%,transparent 50%);background-size:1px 2px;background-position:0 0px"></div>
<div class="r" style="left:307px;top:458px;width:1px;height:16px;background:linear-gradient(#c4c4c4 50%,transparent 50%);background-size:1px 2px;background-position:0 0px"></div>
<div class="r" style="left:347px;top:458px;width:1px;height:16px;background:linear-gradient(#c4c4c4 50%,transparent 50%);background-size:1px 2px;background-position:0 0px"></div>
<div class="r" style="left:417px;top:458px;width:1px;height:16px;background:linear-gradient(#c4c4c4 50%,transparent 50%);background-size:1px 2px;background-position:0 0px"></div>
<div class="r" style="left:437px;top:458px;width:1px;height:16px;background:linear-gradient(#c4c4c4 50%,transparent 50%);background-size:1px 2px;background-position:0 0px"></div>
<div class="r" style="left:487px;top:458px;width:1px;height:16px;background:linear-gradient(#c4c4c4 50%,transparent 50%);background-size:1px 2px;background-position:0 0px"></div>
<div class="r" style="left:537px;top:458px;width:1px;height:16px;background:linear-gradient(#c4c4c4 50%,transparent 50%);background-size:1px 2px;background-position:0 0px"></div>
<div class="r" style="left:870px;top:458px;width:1px;height:16px;background:linear-gradient(#c4c4c4 50%,transparent 50%);background-size:1px 2px;background-position:0 0px"></div>
<div class="r" style="left:950px;top:458px;width:1px;height:16px;background:linear-gradient(#c4c4c4 50%,transparent 50%);background-size:1px 2px;background-position:0 0px"></div>
<div class="r" style="left:1030px;top:458px;width:1px;height:16px;background:linear-gradient(#c4c4c4 50%,transparent 50%);background-size:1px 2px;background-position:0 0px"></div>
<div class="r" style="left:1105px;top:458px;width:1px;height:16px;background:linear-gradient(#c4c4c4 50%,transparent 50%);background-size:1px 2px;background-position:0 0px"></div>
<div class="r" style="left:1180px;top:458px;width:1px;height:16px;background:linear-gradient(#c4c4c4 50%,transparent 50%);background-size:1px 2px;background-position:0 0px"></div>
<div class="t" style="left:437px;width:50px;text-align:center;top:459.99px;font-size:11px;line-height:14.4px;color:#000">1530</div>
<div class="t" style="left:487px;width:50px;text-align:center;top:459.99px;font-size:11px;line-height:14.4px;color:#000">1000</div>
<div class="t" style="left:541px;top:460.69px;font-size:11px;line-height:13px;color:#000;">Gas</div>
<div class="t" style="left:871px;width:76px;text-align:right;top:460.69px;font-size:11px;line-height:13px;color:#1a1aff;">61.30</div>
<div class="t" style="left:1032px;width:70px;text-align:right;top:460.69px;font-size:11px;line-height:13px;color:#1a1aff;">4.38</div>
<div class="t" style="left:1109px;top:460.69px;font-size:11px;line-height:13px;color:#000;">UStn</div>
<div class="r" style="left:241px;top:474px;width:1335px;height:17px;background:#e9e9e9"></div>
<div class="r" style="left:241px;top:474px;width:1335px;height:1px;background:linear-gradient(to right,#c4c4c4 50%,transparent 50%);background-size:2px 1px;background-position:0px 0"></div>
<div class="r" style="left:241px;top:491px;width:1335px;height:1px;background:linear-gradient(to right,#c4c4c4 50%,transparent 50%);background-size:2px 1px;background-position:0px 0"></div>
<div class="r" style="left:257px;top:475px;width:1px;height:16px;background:linear-gradient(#fff 50%,transparent 50%);background-size:1px 2px;background-position:0 0px"></div>
<div class="r" style="left:307px;top:475px;width:1px;height:16px;background:linear-gradient(#fff 50%,transparent 50%);background-size:1px 2px;background-position:0 0px"></div>
<div class="r" style="left:347px;top:475px;width:1px;height:16px;background:linear-gradient(#fff 50%,transparent 50%);background-size:1px 2px;background-position:0 0px"></div>
<div class="r" style="left:417px;top:475px;width:1px;height:16px;background:linear-gradient(#fff 50%,transparent 50%);background-size:1px 2px;background-position:0 0px"></div>
<div class="r" style="left:437px;top:475px;width:1px;height:16px;background:linear-gradient(#fff 50%,transparent 50%);background-size:1px 2px;background-position:0 0px"></div>
<div class="r" style="left:487px;top:475px;width:1px;height:16px;background:linear-gradient(#fff 50%,transparent 50%);background-size:1px 2px;background-position:0 0px"></div>
<div class="r" style="left:537px;top:475px;width:1px;height:16px;background:linear-gradient(#fff 50%,transparent 50%);background-size:1px 2px;background-position:0 0px"></div>
<div class="r" style="left:870px;top:475px;width:1px;height:16px;background:linear-gradient(#fff 50%,transparent 50%);background-size:1px 2px;background-position:0 0px"></div>
<div class="r" style="left:950px;top:475px;width:1px;height:16px;background:linear-gradient(#fff 50%,transparent 50%);background-size:1px 2px;background-position:0 0px"></div>
<div class="r" style="left:1030px;top:475px;width:1px;height:16px;background:linear-gradient(#fff 50%,transparent 50%);background-size:1px 2px;background-position:0 0px"></div>
<div class="r" style="left:1105px;top:475px;width:1px;height:16px;background:linear-gradient(#fff 50%,transparent 50%);background-size:1px 2px;background-position:0 0px"></div>
<div class="r" style="left:1180px;top:475px;width:1px;height:16px;background:linear-gradient(#fff 50%,transparent 50%);background-size:1px 2px;background-position:0 0px"></div>
<div class="t" style="left:259px;width:45px;text-align:right;top:477.69px;font-size:11px;line-height:13px;color:#000;">133</div>
<div class="t" style="left:347px;width:70px;text-align:center;top:476.99px;font-size:11px;line-height:14.4px;color:#000">01.04.2019</div>
<div class="t" style="left:437px;width:50px;text-align:center;top:476.99px;font-size:11px;line-height:14.4px;color:#000">1000</div>
<div class="t" style="left:487px;width:50px;text-align:center;top:476.99px;font-size:11px;line-height:14.4px;color:#000">3202</div>
<div class="t" style="left:541px;top:477.69px;font-size:11px;line-height:13px;color:#000;">Farbe</div>
<div class="t" style="left:871px;width:76px;text-align:right;top:477.69px;font-size:11px;line-height:13px;color:#1a1aff;">800.00</div>
<div class="r" style="left:257px;top:492px;width:1px;height:16px;background:linear-gradient(#c4c4c4 50%,transparent 50%);background-size:1px 2px;background-position:0 0px"></div>
<div class="r" style="left:307px;top:492px;width:1px;height:16px;background:linear-gradient(#c4c4c4 50%,transparent 50%);background-size:1px 2px;background-position:0 0px"></div>
<div class="r" style="left:347px;top:492px;width:1px;height:16px;background:linear-gradient(#c4c4c4 50%,transparent 50%);background-size:1px 2px;background-position:0 0px"></div>
<div class="r" style="left:417px;top:492px;width:1px;height:16px;background:linear-gradient(#c4c4c4 50%,transparent 50%);background-size:1px 2px;background-position:0 0px"></div>
<div class="r" style="left:437px;top:492px;width:1px;height:16px;background:linear-gradient(#c4c4c4 50%,transparent 50%);background-size:1px 2px;background-position:0 0px"></div>
<div class="r" style="left:487px;top:492px;width:1px;height:16px;background:linear-gradient(#c4c4c4 50%,transparent 50%);background-size:1px 2px;background-position:0 0px"></div>
<div class="r" style="left:537px;top:492px;width:1px;height:16px;background:linear-gradient(#c4c4c4 50%,transparent 50%);background-size:1px 2px;background-position:0 0px"></div>
<div class="r" style="left:870px;top:492px;width:1px;height:16px;background:linear-gradient(#c4c4c4 50%,transparent 50%);background-size:1px 2px;background-position:0 0px"></div>
<div class="r" style="left:950px;top:492px;width:1px;height:16px;background:linear-gradient(#c4c4c4 50%,transparent 50%);background-size:1px 2px;background-position:0 0px"></div>
<div class="r" style="left:1030px;top:492px;width:1px;height:16px;background:linear-gradient(#c4c4c4 50%,transparent 50%);background-size:1px 2px;background-position:0 0px"></div>
<div class="r" style="left:1105px;top:492px;width:1px;height:16px;background:linear-gradient(#c4c4c4 50%,transparent 50%);background-size:1px 2px;background-position:0 0px"></div>
<div class="r" style="left:1180px;top:492px;width:1px;height:16px;background:linear-gradient(#c4c4c4 50%,transparent 50%);background-size:1px 2px;background-position:0 0px"></div>
<div class="t" style="left:437px;width:50px;text-align:center;top:493.99px;font-size:11px;line-height:14.4px;color:#000">3202</div>
<div class="t" style="left:487px;width:50px;text-align:center;top:493.99px;font-size:11px;line-height:14.4px;color:#000">1000</div>
<div class="t" style="left:541px;top:494.69px;font-size:11px;line-height:13px;color:#000;">Farbe</div>
<div class="t" style="left:951px;width:76px;text-align:right;top:494.69px;font-size:11px;line-height:13px;color:#1a1aff;">800.00</div>
<div class="t" style="left:1032px;width:70px;text-align:right;top:494.69px;font-size:11px;line-height:13px;color:#1a1aff;">57.20</div>
<div class="t" style="left:1109px;top:494.69px;font-size:11px;line-height:13px;color:#000;">UStn</div>
<div class="r" style="left:241px;top:508px;width:1335px;height:17px;background:#e9e9e9"></div>
<div class="r" style="left:241px;top:508px;width:1335px;height:1px;background:linear-gradient(to right,#c4c4c4 50%,transparent 50%);background-size:2px 1px;background-position:0px 0"></div>
<div class="r" style="left:241px;top:525px;width:1335px;height:1px;background:linear-gradient(to right,#c4c4c4 50%,transparent 50%);background-size:2px 1px;background-position:0px 0"></div>
<div class="r" style="left:257px;top:509px;width:1px;height:16px;background:linear-gradient(#fff 50%,transparent 50%);background-size:1px 2px;background-position:0 0px"></div>
<div class="r" style="left:307px;top:509px;width:1px;height:16px;background:linear-gradient(#fff 50%,transparent 50%);background-size:1px 2px;background-position:0 0px"></div>
<div class="r" style="left:347px;top:509px;width:1px;height:16px;background:linear-gradient(#fff 50%,transparent 50%);background-size:1px 2px;background-position:0 0px"></div>
<div class="r" style="left:417px;top:509px;width:1px;height:16px;background:linear-gradient(#fff 50%,transparent 50%);background-size:1px 2px;background-position:0 0px"></div>
<div class="r" style="left:437px;top:509px;width:1px;height:16px;background:linear-gradient(#fff 50%,transparent 50%);background-size:1px 2px;background-position:0 0px"></div>
<div class="r" style="left:487px;top:509px;width:1px;height:16px;background:linear-gradient(#fff 50%,transparent 50%);background-size:1px 2px;background-position:0 0px"></div>
<div class="r" style="left:537px;top:509px;width:1px;height:16px;background:linear-gradient(#fff 50%,transparent 50%);background-size:1px 2px;background-position:0 0px"></div>
<div class="r" style="left:870px;top:509px;width:1px;height:16px;background:linear-gradient(#fff 50%,transparent 50%);background-size:1px 2px;background-position:0 0px"></div>
<div class="r" style="left:950px;top:509px;width:1px;height:16px;background:linear-gradient(#fff 50%,transparent 50%);background-size:1px 2px;background-position:0 0px"></div>
<div class="r" style="left:1030px;top:509px;width:1px;height:16px;background:linear-gradient(#fff 50%,transparent 50%);background-size:1px 2px;background-position:0 0px"></div>
<div class="r" style="left:1105px;top:509px;width:1px;height:16px;background:linear-gradient(#fff 50%,transparent 50%);background-size:1px 2px;background-position:0 0px"></div>
<div class="r" style="left:1180px;top:509px;width:1px;height:16px;background:linear-gradient(#fff 50%,transparent 50%);background-size:1px 2px;background-position:0 0px"></div>
<div class="t" style="left:259px;width:45px;text-align:right;top:511.69px;font-size:11px;line-height:13px;color:#000;">132</div>
<div class="t" style="left:347px;width:70px;text-align:center;top:510.99px;font-size:11px;line-height:14.4px;color:#000">05.03.2019</div>
<div class="t" style="left:437px;width:50px;text-align:center;top:510.99px;font-size:11px;line-height:14.4px;color:#000">1000</div>
<div class="t" style="left:487px;width:50px;text-align:center;top:510.99px;font-size:11px;line-height:14.4px;color:#000">1210</div>
<div class="t" style="left:541px;top:511.69px;font-size:11px;line-height:13px;color:#000;">Werkzeugmaschine</div>
<div class="t" style="left:951px;width:76px;text-align:right;top:511.69px;font-size:11px;line-height:13px;color:#1a1aff;">1&#39;400.00</div>
<div class="r" style="left:257px;top:526px;width:1px;height:16px;background:linear-gradient(#c4c4c4 50%,transparent 50%);background-size:1px 2px;background-position:0 0px"></div>
<div class="r" style="left:307px;top:526px;width:1px;height:16px;background:linear-gradient(#c4c4c4 50%,transparent 50%);background-size:1px 2px;background-position:0 0px"></div>
<div class="r" style="left:347px;top:526px;width:1px;height:16px;background:linear-gradient(#c4c4c4 50%,transparent 50%);background-size:1px 2px;background-position:0 0px"></div>
<div class="r" style="left:417px;top:526px;width:1px;height:16px;background:linear-gradient(#c4c4c4 50%,transparent 50%);background-size:1px 2px;background-position:0 0px"></div>
<div class="r" style="left:437px;top:526px;width:1px;height:16px;background:linear-gradient(#c4c4c4 50%,transparent 50%);background-size:1px 2px;background-position:0 0px"></div>
<div class="r" style="left:487px;top:526px;width:1px;height:16px;background:linear-gradient(#c4c4c4 50%,transparent 50%);background-size:1px 2px;background-position:0 0px"></div>
<div class="r" style="left:537px;top:526px;width:1px;height:16px;background:linear-gradient(#c4c4c4 50%,transparent 50%);background-size:1px 2px;background-position:0 0px"></div>
<div class="r" style="left:870px;top:526px;width:1px;height:16px;background:linear-gradient(#c4c4c4 50%,transparent 50%);background-size:1px 2px;background-position:0 0px"></div>
<div class="r" style="left:950px;top:526px;width:1px;height:16px;background:linear-gradient(#c4c4c4 50%,transparent 50%);background-size:1px 2px;background-position:0 0px"></div>
<div class="r" style="left:1030px;top:526px;width:1px;height:16px;background:linear-gradient(#c4c4c4 50%,transparent 50%);background-size:1px 2px;background-position:0 0px"></div>
<div class="r" style="left:1105px;top:526px;width:1px;height:16px;background:linear-gradient(#c4c4c4 50%,transparent 50%);background-size:1px 2px;background-position:0 0px"></div>
<div class="r" style="left:1180px;top:526px;width:1px;height:16px;background:linear-gradient(#c4c4c4 50%,transparent 50%);background-size:1px 2px;background-position:0 0px"></div>
<div class="t" style="left:437px;width:50px;text-align:center;top:527.99px;font-size:11px;line-height:14.4px;color:#000">1210</div>
<div class="t" style="left:487px;width:50px;text-align:center;top:527.99px;font-size:11px;line-height:14.4px;color:#000">1000</div>
<div class="t" style="left:541px;top:528.69px;font-size:11px;line-height:13px;color:#000;">Werkzeugmaschine</div>
<div class="t" style="left:871px;width:76px;text-align:right;top:528.69px;font-size:11px;line-height:13px;color:#1a1aff;">1&#39;400.00</div>
<div class="t" style="left:1032px;width:70px;text-align:right;top:528.69px;font-size:11px;line-height:13px;color:#1a1aff;">100.09</div>
<div class="t" style="left:1109px;top:528.69px;font-size:11px;line-height:13px;color:#000;">VSBn</div>
<div class="r" style="left:241px;top:542px;width:1335px;height:17px;background:#e9e9e9"></div>
<div class="r" style="left:241px;top:542px;width:1335px;height:1px;background:linear-gradient(to right,#c4c4c4 50%,transparent 50%);background-size:2px 1px;background-position:0px 0"></div>
<div class="r" style="left:241px;top:559px;width:1335px;height:1px;background:linear-gradient(to right,#c4c4c4 50%,transparent 50%);background-size:2px 1px;background-position:0px 0"></div>
<div class="r" style="left:257px;top:543px;width:1px;height:16px;background:linear-gradient(#fff 50%,transparent 50%);background-size:1px 2px;background-position:0 0px"></div>
<div class="r" style="left:307px;top:543px;width:1px;height:16px;background:linear-gradient(#fff 50%,transparent 50%);background-size:1px 2px;background-position:0 0px"></div>
<div class="r" style="left:347px;top:543px;width:1px;height:16px;background:linear-gradient(#fff 50%,transparent 50%);background-size:1px 2px;background-position:0 0px"></div>
<div class="r" style="left:417px;top:543px;width:1px;height:16px;background:linear-gradient(#fff 50%,transparent 50%);background-size:1px 2px;background-position:0 0px"></div>
<div class="r" style="left:437px;top:543px;width:1px;height:16px;background:linear-gradient(#fff 50%,transparent 50%);background-size:1px 2px;background-position:0 0px"></div>
<div class="r" style="left:487px;top:543px;width:1px;height:16px;background:linear-gradient(#fff 50%,transparent 50%);background-size:1px 2px;background-position:0 0px"></div>
<div class="r" style="left:537px;top:543px;width:1px;height:16px;background:linear-gradient(#fff 50%,transparent 50%);background-size:1px 2px;background-position:0 0px"></div>
<div class="r" style="left:870px;top:543px;width:1px;height:16px;background:linear-gradient(#fff 50%,transparent 50%);background-size:1px 2px;background-position:0 0px"></div>
<div class="r" style="left:950px;top:543px;width:1px;height:16px;background:linear-gradient(#fff 50%,transparent 50%);background-size:1px 2px;background-position:0 0px"></div>
<div class="r" style="left:1030px;top:543px;width:1px;height:16px;background:linear-gradient(#fff 50%,transparent 50%);background-size:1px 2px;background-position:0 0px"></div>
<div class="r" style="left:1105px;top:543px;width:1px;height:16px;background:linear-gradient(#fff 50%,transparent 50%);background-size:1px 2px;background-position:0 0px"></div>
<div class="r" style="left:1180px;top:543px;width:1px;height:16px;background:linear-gradient(#fff 50%,transparent 50%);background-size:1px 2px;background-position:0 0px"></div>
<div class="t" style="left:259px;width:45px;text-align:right;top:545.69px;font-size:11px;line-height:13px;color:#000;">131</div>
<div class="t" style="left:347px;width:70px;text-align:center;top:544.99px;font-size:11px;line-height:14.4px;color:#000">04.03.2019</div>
<div class="t" style="left:437px;width:50px;text-align:center;top:544.99px;font-size:11px;line-height:14.4px;color:#000">1000</div>
<div class="t" style="left:487px;width:50px;text-align:center;top:544.99px;font-size:11px;line-height:14.4px;color:#000">1513</div>
<div class="t" style="left:541px;top:545.69px;font-size:11px;line-height:13px;color:#000;">Kabel</div>
<div class="t" style="left:951px;width:76px;text-align:right;top:545.69px;font-size:11px;line-height:13px;color:#1a1aff;">115.00</div>
<div class="r" style="left:257px;top:560px;width:1px;height:16px;background:linear-gradient(#c4c4c4 50%,transparent 50%);background-size:1px 2px;background-position:0 0px"></div>
<div class="r" style="left:307px;top:560px;width:1px;height:16px;background:linear-gradient(#c4c4c4 50%,transparent 50%);background-size:1px 2px;background-position:0 0px"></div>
<div class="r" style="left:347px;top:560px;width:1px;height:16px;background:linear-gradient(#c4c4c4 50%,transparent 50%);background-size:1px 2px;background-position:0 0px"></div>
<div class="r" style="left:417px;top:560px;width:1px;height:16px;background:linear-gradient(#c4c4c4 50%,transparent 50%);background-size:1px 2px;background-position:0 0px"></div>
<div class="r" style="left:437px;top:560px;width:1px;height:16px;background:linear-gradient(#c4c4c4 50%,transparent 50%);background-size:1px 2px;background-position:0 0px"></div>
<div class="r" style="left:487px;top:560px;width:1px;height:16px;background:linear-gradient(#c4c4c4 50%,transparent 50%);background-size:1px 2px;background-position:0 0px"></div>
<div class="r" style="left:537px;top:560px;width:1px;height:16px;background:linear-gradient(#c4c4c4 50%,transparent 50%);background-size:1px 2px;background-position:0 0px"></div>
<div class="r" style="left:870px;top:560px;width:1px;height:16px;background:linear-gradient(#c4c4c4 50%,transparent 50%);background-size:1px 2px;background-position:0 0px"></div>
<div class="r" style="left:950px;top:560px;width:1px;height:16px;background:linear-gradient(#c4c4c4 50%,transparent 50%);background-size:1px 2px;background-position:0 0px"></div>
<div class="r" style="left:1030px;top:560px;width:1px;height:16px;background:linear-gradient(#c4c4c4 50%,transparent 50%);background-size:1px 2px;background-position:0 0px"></div>
<div class="r" style="left:1105px;top:560px;width:1px;height:16px;background:linear-gradient(#c4c4c4 50%,transparent 50%);background-size:1px 2px;background-position:0 0px"></div>
<div class="r" style="left:1180px;top:560px;width:1px;height:16px;background:linear-gradient(#c4c4c4 50%,transparent 50%);background-size:1px 2px;background-position:0 0px"></div>
<div class="t" style="left:437px;width:50px;text-align:center;top:561.99px;font-size:11px;line-height:14.4px;color:#000">1513</div>
<div class="t" style="left:487px;width:50px;text-align:center;top:561.99px;font-size:11px;line-height:14.4px;color:#000">1000</div>
<div class="t" style="left:541px;top:562.69px;font-size:11px;line-height:13px;color:#000;">Kabel</div>
<div class="t" style="left:871px;width:76px;text-align:right;top:562.69px;font-size:11px;line-height:13px;color:#1a1aff;">115.00</div>
<div class="t" style="left:1032px;width:70px;text-align:right;top:562.69px;font-size:11px;line-height:13px;color:#1a1aff;">8.22</div>
<div class="t" style="left:1109px;top:562.69px;font-size:11px;line-height:13px;color:#000;">VSBn</div>
<div class="r" style="left:241px;top:576px;width:1335px;height:17px;background:#e9e9e9"></div>
<div class="r" style="left:241px;top:576px;width:1335px;height:1px;background:linear-gradient(to right,#c4c4c4 50%,transparent 50%);background-size:2px 1px;background-position:0px 0"></div>
<div class="r" style="left:241px;top:593px;width:1335px;height:1px;background:linear-gradient(to right,#c4c4c4 50%,transparent 50%);background-size:2px 1px;background-position:0px 0"></div>
<div class="r" style="left:257px;top:577px;width:1px;height:16px;background:linear-gradient(#fff 50%,transparent 50%);background-size:1px 2px;background-position:0 0px"></div>
<div class="r" style="left:307px;top:577px;width:1px;height:16px;background:linear-gradient(#fff 50%,transparent 50%);background-size:1px 2px;background-position:0 0px"></div>
<div class="r" style="left:347px;top:577px;width:1px;height:16px;background:linear-gradient(#fff 50%,transparent 50%);background-size:1px 2px;background-position:0 0px"></div>
<div class="r" style="left:417px;top:577px;width:1px;height:16px;background:linear-gradient(#fff 50%,transparent 50%);background-size:1px 2px;background-position:0 0px"></div>
<div class="r" style="left:437px;top:577px;width:1px;height:16px;background:linear-gradient(#fff 50%,transparent 50%);background-size:1px 2px;background-position:0 0px"></div>
<div class="r" style="left:487px;top:577px;width:1px;height:16px;background:linear-gradient(#fff 50%,transparent 50%);background-size:1px 2px;background-position:0 0px"></div>
<div class="r" style="left:537px;top:577px;width:1px;height:16px;background:linear-gradient(#fff 50%,transparent 50%);background-size:1px 2px;background-position:0 0px"></div>
<div class="r" style="left:870px;top:577px;width:1px;height:16px;background:linear-gradient(#fff 50%,transparent 50%);background-size:1px 2px;background-position:0 0px"></div>
<div class="r" style="left:950px;top:577px;width:1px;height:16px;background:linear-gradient(#fff 50%,transparent 50%);background-size:1px 2px;background-position:0 0px"></div>
<div class="r" style="left:1030px;top:577px;width:1px;height:16px;background:linear-gradient(#fff 50%,transparent 50%);background-size:1px 2px;background-position:0 0px"></div>
<div class="r" style="left:1105px;top:577px;width:1px;height:16px;background:linear-gradient(#fff 50%,transparent 50%);background-size:1px 2px;background-position:0 0px"></div>
<div class="r" style="left:1180px;top:577px;width:1px;height:16px;background:linear-gradient(#fff 50%,transparent 50%);background-size:1px 2px;background-position:0 0px"></div>
<div class="t" style="left:259px;width:45px;text-align:right;top:579.69px;font-size:11px;line-height:13px;color:#000;">130</div>
<div class="t" style="left:347px;width:70px;text-align:center;top:578.99px;font-size:11px;line-height:14.4px;color:#000">02.03.2019</div>
<div class="t" style="left:437px;width:50px;text-align:center;top:578.99px;font-size:11px;line-height:14.4px;color:#000">1000</div>
<div class="t" style="left:487px;width:50px;text-align:center;top:578.99px;font-size:11px;line-height:14.4px;color:#000">1530</div>
<div class="t" style="left:541px;top:579.69px;font-size:11px;line-height:13px;color:#000;">Benzin Migrol</div>
<div class="t" style="left:951px;width:76px;text-align:right;top:579.69px;font-size:11px;line-height:13px;color:#1a1aff;">61.30</div>
<div class="r" style="left:257px;top:594px;width:1px;height:16px;background:linear-gradient(#c4c4c4 50%,transparent 50%);background-size:1px 2px;background-position:0 0px"></div>
<div class="r" style="left:307px;top:594px;width:1px;height:16px;background:linear-gradient(#c4c4c4 50%,transparent 50%);background-size:1px 2px;background-position:0 0px"></div>
<div class="r" style="left:347px;top:594px;width:1px;height:16px;background:linear-gradient(#c4c4c4 50%,transparent 50%);background-size:1px 2px;background-position:0 0px"></div>
<div class="r" style="left:417px;top:594px;width:1px;height:16px;background:linear-gradient(#c4c4c4 50%,transparent 50%);background-size:1px 2px;background-position:0 0px"></div>
<div class="r" style="left:437px;top:594px;width:1px;height:16px;background:linear-gradient(#c4c4c4 50%,transparent 50%);background-size:1px 2px;background-position:0 0px"></div>
<div class="r" style="left:487px;top:594px;width:1px;height:16px;background:linear-gradient(#c4c4c4 50%,transparent 50%);background-size:1px 2px;background-position:0 0px"></div>
<div class="r" style="left:537px;top:594px;width:1px;height:16px;background:linear-gradient(#c4c4c4 50%,transparent 50%);background-size:1px 2px;background-position:0 0px"></div>
<div class="r" style="left:870px;top:594px;width:1px;height:16px;background:linear-gradient(#c4c4c4 50%,transparent 50%);background-size:1px 2px;background-position:0 0px"></div>
<div class="r" style="left:950px;top:594px;width:1px;height:16px;background:linear-gradient(#c4c4c4 50%,transparent 50%);background-size:1px 2px;background-position:0 0px"></div>
<div class="r" style="left:1030px;top:594px;width:1px;height:16px;background:linear-gradient(#c4c4c4 50%,transparent 50%);background-size:1px 2px;background-position:0 0px"></div>
<div class="r" style="left:1105px;top:594px;width:1px;height:16px;background:linear-gradient(#c4c4c4 50%,transparent 50%);background-size:1px 2px;background-position:0 0px"></div>
<div class="r" style="left:1180px;top:594px;width:1px;height:16px;background:linear-gradient(#c4c4c4 50%,transparent 50%);background-size:1px 2px;background-position:0 0px"></div>
<div class="t" style="left:437px;width:50px;text-align:center;top:595.99px;font-size:11px;line-height:14.4px;color:#000">1530</div>
<div class="t" style="left:487px;width:50px;text-align:center;top:595.99px;font-size:11px;line-height:14.4px;color:#000">1000</div>
<div class="t" style="left:541px;top:596.69px;font-size:11px;line-height:13px;color:#000;">Benzin Migrol</div>
<div class="t" style="left:871px;width:76px;text-align:right;top:596.69px;font-size:11px;line-height:13px;color:#1a1aff;">61.30</div>
<div class="t" style="left:1032px;width:70px;text-align:right;top:596.69px;font-size:11px;line-height:13px;color:#1a1aff;">4.38</div>
<div class="t" style="left:1109px;top:596.69px;font-size:11px;line-height:13px;color:#000;">UStn</div>
<div class="r" style="left:241px;top:610px;width:1335px;height:17px;background:#e9e9e9"></div>
<div class="r" style="left:241px;top:610px;width:1335px;height:1px;background:linear-gradient(to right,#c4c4c4 50%,transparent 50%);background-size:2px 1px;background-position:0px 0"></div>
<div class="r" style="left:241px;top:627px;width:1335px;height:1px;background:linear-gradient(to right,#c4c4c4 50%,transparent 50%);background-size:2px 1px;background-position:0px 0"></div>
<div class="r" style="left:257px;top:611px;width:1px;height:16px;background:linear-gradient(#fff 50%,transparent 50%);background-size:1px 2px;background-position:0 0px"></div>
<div class="r" style="left:307px;top:611px;width:1px;height:16px;background:linear-gradient(#fff 50%,transparent 50%);background-size:1px 2px;background-position:0 0px"></div>
<div class="r" style="left:347px;top:611px;width:1px;height:16px;background:linear-gradient(#fff 50%,transparent 50%);background-size:1px 2px;background-position:0 0px"></div>
<div class="r" style="left:417px;top:611px;width:1px;height:16px;background:linear-gradient(#fff 50%,transparent 50%);background-size:1px 2px;background-position:0 0px"></div>
<div class="r" style="left:437px;top:611px;width:1px;height:16px;background:linear-gradient(#fff 50%,transparent 50%);background-size:1px 2px;background-position:0 0px"></div>
<div class="r" style="left:487px;top:611px;width:1px;height:16px;background:linear-gradient(#fff 50%,transparent 50%);background-size:1px 2px;background-position:0 0px"></div>
<div class="r" style="left:537px;top:611px;width:1px;height:16px;background:linear-gradient(#fff 50%,transparent 50%);background-size:1px 2px;background-position:0 0px"></div>
<div class="r" style="left:870px;top:611px;width:1px;height:16px;background:linear-gradient(#fff 50%,transparent 50%);background-size:1px 2px;background-position:0 0px"></div>
<div class="r" style="left:950px;top:611px;width:1px;height:16px;background:linear-gradient(#fff 50%,transparent 50%);background-size:1px 2px;background-position:0 0px"></div>
<div class="r" style="left:1030px;top:611px;width:1px;height:16px;background:linear-gradient(#fff 50%,transparent 50%);background-size:1px 2px;background-position:0 0px"></div>
<div class="r" style="left:1105px;top:611px;width:1px;height:16px;background:linear-gradient(#fff 50%,transparent 50%);background-size:1px 2px;background-position:0 0px"></div>
<div class="r" style="left:1180px;top:611px;width:1px;height:16px;background:linear-gradient(#fff 50%,transparent 50%);background-size:1px 2px;background-position:0 0px"></div>
<div class="t" style="left:259px;width:45px;text-align:right;top:613.69px;font-size:11px;line-height:13px;color:#000;">129</div>
<div class="t" style="left:347px;width:70px;text-align:center;top:612.99px;font-size:11px;line-height:14.4px;color:#000">01.03.2019</div>
<div class="t" style="left:437px;width:50px;text-align:center;top:612.99px;font-size:11px;line-height:14.4px;color:#000">1000</div>
<div class="t" style="left:487px;width:50px;text-align:center;top:612.99px;font-size:11px;line-height:14.4px;color:#000">3202</div>
<div class="t" style="left:541px;top:613.69px;font-size:11px;line-height:13px;color:#000;">Verkauf Büromöbel</div>
<div class="t" style="left:871px;width:76px;text-align:right;top:613.69px;font-size:11px;line-height:13px;color:#1a1aff;">800.00</div>
<div class="r" style="left:257px;top:628px;width:1px;height:16px;background:linear-gradient(#c4c4c4 50%,transparent 50%);background-size:1px 2px;background-position:0 0px"></div>
<div class="r" style="left:307px;top:628px;width:1px;height:16px;background:linear-gradient(#c4c4c4 50%,transparent 50%);background-size:1px 2px;background-position:0 0px"></div>
<div class="r" style="left:347px;top:628px;width:1px;height:16px;background:linear-gradient(#c4c4c4 50%,transparent 50%);background-size:1px 2px;background-position:0 0px"></div>
<div class="r" style="left:417px;top:628px;width:1px;height:16px;background:linear-gradient(#c4c4c4 50%,transparent 50%);background-size:1px 2px;background-position:0 0px"></div>
<div class="r" style="left:437px;top:628px;width:1px;height:16px;background:linear-gradient(#c4c4c4 50%,transparent 50%);background-size:1px 2px;background-position:0 0px"></div>
<div class="r" style="left:487px;top:628px;width:1px;height:16px;background:linear-gradient(#c4c4c4 50%,transparent 50%);background-size:1px 2px;background-position:0 0px"></div>
<div class="r" style="left:537px;top:628px;width:1px;height:16px;background:linear-gradient(#c4c4c4 50%,transparent 50%);background-size:1px 2px;background-position:0 0px"></div>
<div class="r" style="left:870px;top:628px;width:1px;height:16px;background:linear-gradient(#c4c4c4 50%,transparent 50%);background-size:1px 2px;background-position:0 0px"></div>
<div class="r" style="left:950px;top:628px;width:1px;height:16px;background:linear-gradient(#c4c4c4 50%,transparent 50%);background-size:1px 2px;background-position:0 0px"></div>
<div class="r" style="left:1030px;top:628px;width:1px;height:16px;background:linear-gradient(#c4c4c4 50%,transparent 50%);background-size:1px 2px;background-position:0 0px"></div>
<div class="r" style="left:1105px;top:628px;width:1px;height:16px;background:linear-gradient(#c4c4c4 50%,transparent 50%);background-size:1px 2px;background-position:0 0px"></div>
<div class="r" style="left:1180px;top:628px;width:1px;height:16px;background:linear-gradient(#c4c4c4 50%,transparent 50%);background-size:1px 2px;background-position:0 0px"></div>
<div class="t" style="left:437px;width:50px;text-align:center;top:629.99px;font-size:11px;line-height:14.4px;color:#000">3202</div>
<div class="t" style="left:487px;width:50px;text-align:center;top:629.99px;font-size:11px;line-height:14.4px;color:#000">1000</div>
<div class="t" style="left:541px;top:630.69px;font-size:11px;line-height:13px;color:#000;">Verkauf Büromöbel</div>
<div class="t" style="left:951px;width:76px;text-align:right;top:630.69px;font-size:11px;line-height:13px;color:#1a1aff;">800.00</div>
<div class="t" style="left:1032px;width:70px;text-align:right;top:630.69px;font-size:11px;line-height:13px;color:#1a1aff;">57.20</div>
<div class="t" style="left:1109px;top:630.69px;font-size:11px;line-height:13px;color:#000;">UStn</div>
<div class="r" style="left:241px;top:644px;width:1335px;height:17px;background:#e9e9e9"></div>
<div class="r" style="left:241px;top:644px;width:1335px;height:1px;background:linear-gradient(to right,#c4c4c4 50%,transparent 50%);background-size:2px 1px;background-position:0px 0"></div>
<div class="r" style="left:241px;top:661px;width:1335px;height:1px;background:linear-gradient(to right,#c4c4c4 50%,transparent 50%);background-size:2px 1px;background-position:0px 0"></div>
<div class="r" style="left:257px;top:645px;width:1px;height:16px;background:linear-gradient(#fff 50%,transparent 50%);background-size:1px 2px;background-position:0 0px"></div>
<div class="r" style="left:307px;top:645px;width:1px;height:16px;background:linear-gradient(#fff 50%,transparent 50%);background-size:1px 2px;background-position:0 0px"></div>
<div class="r" style="left:347px;top:645px;width:1px;height:16px;background:linear-gradient(#fff 50%,transparent 50%);background-size:1px 2px;background-position:0 0px"></div>
<div class="r" style="left:417px;top:645px;width:1px;height:16px;background:linear-gradient(#fff 50%,transparent 50%);background-size:1px 2px;background-position:0 0px"></div>
<div class="r" style="left:437px;top:645px;width:1px;height:16px;background:linear-gradient(#fff 50%,transparent 50%);background-size:1px 2px;background-position:0 0px"></div>
<div class="r" style="left:487px;top:645px;width:1px;height:16px;background:linear-gradient(#fff 50%,transparent 50%);background-size:1px 2px;background-position:0 0px"></div>
<div class="r" style="left:537px;top:645px;width:1px;height:16px;background:linear-gradient(#fff 50%,transparent 50%);background-size:1px 2px;background-position:0 0px"></div>
<div class="r" style="left:870px;top:645px;width:1px;height:16px;background:linear-gradient(#fff 50%,transparent 50%);background-size:1px 2px;background-position:0 0px"></div>
<div class="r" style="left:950px;top:645px;width:1px;height:16px;background:linear-gradient(#fff 50%,transparent 50%);background-size:1px 2px;background-position:0 0px"></div>
<div class="r" style="left:1030px;top:645px;width:1px;height:16px;background:linear-gradient(#fff 50%,transparent 50%);background-size:1px 2px;background-position:0 0px"></div>
<div class="r" style="left:1105px;top:645px;width:1px;height:16px;background:linear-gradient(#fff 50%,transparent 50%);background-size:1px 2px;background-position:0 0px"></div>
<div class="r" style="left:1180px;top:645px;width:1px;height:16px;background:linear-gradient(#fff 50%,transparent 50%);background-size:1px 2px;background-position:0 0px"></div>
<div class="t" style="left:259px;width:45px;text-align:right;top:647.69px;font-size:11px;line-height:13px;color:#000;">128</div>
<div class="t" style="left:347px;width:70px;text-align:center;top:646.99px;font-size:11px;line-height:14.4px;color:#000">05.02.2019</div>
<div class="t" style="left:437px;width:50px;text-align:center;top:646.99px;font-size:11px;line-height:14.4px;color:#000">1000</div>
<div class="t" style="left:487px;width:50px;text-align:center;top:646.99px;font-size:11px;line-height:14.4px;color:#000">1210</div>
<div class="t" style="left:541px;top:647.69px;font-size:11px;line-height:13px;color:#000;">Leasing</div>
<div class="t" style="left:951px;width:76px;text-align:right;top:647.69px;font-size:11px;line-height:13px;color:#1a1aff;">1&#39;350.00</div>
<div class="r" style="left:257px;top:662px;width:1px;height:16px;background:linear-gradient(#c4c4c4 50%,transparent 50%);background-size:1px 2px;background-position:0 0px"></div>
<div class="r" style="left:307px;top:662px;width:1px;height:16px;background:linear-gradient(#c4c4c4 50%,transparent 50%);background-size:1px 2px;background-position:0 0px"></div>
<div class="r" style="left:347px;top:662px;width:1px;height:16px;background:linear-gradient(#c4c4c4 50%,transparent 50%);background-size:1px 2px;background-position:0 0px"></div>
<div class="r" style="left:417px;top:662px;width:1px;height:16px;background:linear-gradient(#c4c4c4 50%,transparent 50%);background-size:1px 2px;background-position:0 0px"></div>
<div class="r" style="left:437px;top:662px;width:1px;height:16px;background:linear-gradient(#c4c4c4 50%,transparent 50%);background-size:1px 2px;background-position:0 0px"></div>
<div class="r" style="left:487px;top:662px;width:1px;height:16px;background:linear-gradient(#c4c4c4 50%,transparent 50%);background-size:1px 2px;background-position:0 0px"></div>
<div class="r" style="left:537px;top:662px;width:1px;height:16px;background:linear-gradient(#c4c4c4 50%,transparent 50%);background-size:1px 2px;background-position:0 0px"></div>
<div class="r" style="left:870px;top:662px;width:1px;height:16px;background:linear-gradient(#c4c4c4 50%,transparent 50%);background-size:1px 2px;background-position:0 0px"></div>
<div class="r" style="left:950px;top:662px;width:1px;height:16px;background:linear-gradient(#c4c4c4 50%,transparent 50%);background-size:1px 2px;background-position:0 0px"></div>
<div class="r" style="left:1030px;top:662px;width:1px;height:16px;background:linear-gradient(#c4c4c4 50%,transparent 50%);background-size:1px 2px;background-position:0 0px"></div>
<div class="r" style="left:1105px;top:662px;width:1px;height:16px;background:linear-gradient(#c4c4c4 50%,transparent 50%);background-size:1px 2px;background-position:0 0px"></div>
<div class="r" style="left:1180px;top:662px;width:1px;height:16px;background:linear-gradient(#c4c4c4 50%,transparent 50%);background-size:1px 2px;background-position:0 0px"></div>
<div class="t" style="left:437px;width:50px;text-align:center;top:663.99px;font-size:11px;line-height:14.4px;color:#000">1210</div>
<div class="t" style="left:487px;width:50px;text-align:center;top:663.99px;font-size:11px;line-height:14.4px;color:#000">1000</div>
<div class="t" style="left:541px;top:664.69px;font-size:11px;line-height:13px;color:#000;">Leasing</div>
<div class="t" style="left:871px;width:76px;text-align:right;top:664.69px;font-size:11px;line-height:13px;color:#1a1aff;">1&#39;350.00</div>
<div class="t" style="left:1032px;width:70px;text-align:right;top:664.69px;font-size:11px;line-height:13px;color:#1a1aff;">96.52</div>
<div class="t" style="left:1109px;top:664.69px;font-size:11px;line-height:13px;color:#000;">VSBn</div>
<div class="r" style="left:241px;top:678px;width:1335px;height:17px;background:#e9e9e9"></div>
<div class="r" style="left:241px;top:678px;width:1335px;height:1px;background:linear-gradient(to right,#c4c4c4 50%,transparent 50%);background-size:2px 1px;background-position:0px 0"></div>
<div class="r" style="left:241px;top:695px;width:1335px;height:1px;background:linear-gradient(to right,#c4c4c4 50%,transparent 50%);background-size:2px 1px;background-position:0px 0"></div>
<div class="r" style="left:257px;top:679px;width:1px;height:16px;background:linear-gradient(#fff 50%,transparent 50%);background-size:1px 2px;background-position:0 0px"></div>
<div class="r" style="left:307px;top:679px;width:1px;height:16px;background:linear-gradient(#fff 50%,transparent 50%);background-size:1px 2px;background-position:0 0px"></div>
<div class="r" style="left:347px;top:679px;width:1px;height:16px;background:linear-gradient(#fff 50%,transparent 50%);background-size:1px 2px;background-position:0 0px"></div>
<div class="r" style="left:417px;top:679px;width:1px;height:16px;background:linear-gradient(#fff 50%,transparent 50%);background-size:1px 2px;background-position:0 0px"></div>
<div class="r" style="left:437px;top:679px;width:1px;height:16px;background:linear-gradient(#fff 50%,transparent 50%);background-size:1px 2px;background-position:0 0px"></div>
<div class="r" style="left:487px;top:679px;width:1px;height:16px;background:linear-gradient(#fff 50%,transparent 50%);background-size:1px 2px;background-position:0 0px"></div>
<div class="r" style="left:537px;top:679px;width:1px;height:16px;background:linear-gradient(#fff 50%,transparent 50%);background-size:1px 2px;background-position:0 0px"></div>
<div class="r" style="left:870px;top:679px;width:1px;height:16px;background:linear-gradient(#fff 50%,transparent 50%);background-size:1px 2px;background-position:0 0px"></div>
<div class="r" style="left:950px;top:679px;width:1px;height:16px;background:linear-gradient(#fff 50%,transparent 50%);background-size:1px 2px;background-position:0 0px"></div>
<div class="r" style="left:1030px;top:679px;width:1px;height:16px;background:linear-gradient(#fff 50%,transparent 50%);background-size:1px 2px;background-position:0 0px"></div>
<div class="r" style="left:1105px;top:679px;width:1px;height:16px;background:linear-gradient(#fff 50%,transparent 50%);background-size:1px 2px;background-position:0 0px"></div>
<div class="r" style="left:1180px;top:679px;width:1px;height:16px;background:linear-gradient(#fff 50%,transparent 50%);background-size:1px 2px;background-position:0 0px"></div>
<div class="t" style="left:259px;width:45px;text-align:right;top:681.69px;font-size:11px;line-height:13px;color:#000;">127</div>
<div class="t" style="left:347px;width:70px;text-align:center;top:680.99px;font-size:11px;line-height:14.4px;color:#000">04.02.2019</div>
<div class="t" style="left:437px;width:50px;text-align:center;top:680.99px;font-size:11px;line-height:14.4px;color:#000">1000</div>
<div class="t" style="left:487px;width:50px;text-align:center;top:680.99px;font-size:11px;line-height:14.4px;color:#000">1513</div>
<div class="t" style="left:541px;top:681.69px;font-size:11px;line-height:13px;color:#000;">Rechner</div>
<div class="t" style="left:951px;width:76px;text-align:right;top:681.69px;font-size:11px;line-height:13px;color:#1a1aff;">134.00</div>
<div class="r" style="left:257px;top:696px;width:1px;height:16px;background:linear-gradient(#c4c4c4 50%,transparent 50%);background-size:1px 2px;background-position:0 0px"></div>
<div class="r" style="left:307px;top:696px;width:1px;height:16px;background:linear-gradient(#c4c4c4 50%,transparent 50%);background-size:1px 2px;background-position:0 0px"></div>
<div class="r" style="left:347px;top:696px;width:1px;height:16px;background:linear-gradient(#c4c4c4 50%,transparent 50%);background-size:1px 2px;background-position:0 0px"></div>
<div class="r" style="left:417px;top:696px;width:1px;height:16px;background:linear-gradient(#c4c4c4 50%,transparent 50%);background-size:1px 2px;background-position:0 0px"></div>
<div class="r" style="left:437px;top:696px;width:1px;height:16px;background:linear-gradient(#c4c4c4 50%,transparent 50%);background-size:1px 2px;background-position:0 0px"></div>
<div class="r" style="left:487px;top:696px;width:1px;height:16px;background:linear-gradient(#c4c4c4 50%,transparent 50%);background-size:1px 2px;background-position:0 0px"></div>
<div class="r" style="left:537px;top:696px;width:1px;height:16px;background:linear-gradient(#c4c4c4 50%,transparent 50%);background-size:1px 2px;background-position:0 0px"></div>
<div class="r" style="left:870px;top:696px;width:1px;height:16px;background:linear-gradient(#c4c4c4 50%,transparent 50%);background-size:1px 2px;background-position:0 0px"></div>
<div class="r" style="left:950px;top:696px;width:1px;height:16px;background:linear-gradient(#c4c4c4 50%,transparent 50%);background-size:1px 2px;background-position:0 0px"></div>
<div class="r" style="left:1030px;top:696px;width:1px;height:16px;background:linear-gradient(#c4c4c4 50%,transparent 50%);background-size:1px 2px;background-position:0 0px"></div>
<div class="r" style="left:1105px;top:696px;width:1px;height:16px;background:linear-gradient(#c4c4c4 50%,transparent 50%);background-size:1px 2px;background-position:0 0px"></div>
<div class="r" style="left:1180px;top:696px;width:1px;height:16px;background:linear-gradient(#c4c4c4 50%,transparent 50%);background-size:1px 2px;background-position:0 0px"></div>
<div class="t" style="left:437px;width:50px;text-align:center;top:697.99px;font-size:11px;line-height:14.4px;color:#000">1513</div>
<div class="t" style="left:487px;width:50px;text-align:center;top:697.99px;font-size:11px;line-height:14.4px;color:#000">1000</div>
<div class="t" style="left:541px;top:698.69px;font-size:11px;line-height:13px;color:#000;">Rechner</div>
<div class="t" style="left:871px;width:76px;text-align:right;top:698.69px;font-size:11px;line-height:13px;color:#1a1aff;">134.00</div>
<div class="t" style="left:1032px;width:70px;text-align:right;top:698.69px;font-size:11px;line-height:13px;color:#1a1aff;">9.58</div>
<div class="t" style="left:1109px;top:698.69px;font-size:11px;line-height:13px;color:#000;">VSBn</div>
<div class="r" style="left:241px;top:712px;width:1335px;height:17px;background:#e9e9e9"></div>
<div class="r" style="left:241px;top:712px;width:1335px;height:1px;background:linear-gradient(to right,#c4c4c4 50%,transparent 50%);background-size:2px 1px;background-position:0px 0"></div>
<div class="r" style="left:241px;top:729px;width:1335px;height:1px;background:linear-gradient(to right,#c4c4c4 50%,transparent 50%);background-size:2px 1px;background-position:0px 0"></div>
<div class="r" style="left:257px;top:713px;width:1px;height:16px;background:linear-gradient(#fff 50%,transparent 50%);background-size:1px 2px;background-position:0 0px"></div>
<div class="r" style="left:307px;top:713px;width:1px;height:16px;background:linear-gradient(#fff 50%,transparent 50%);background-size:1px 2px;background-position:0 0px"></div>
<div class="r" style="left:347px;top:713px;width:1px;height:16px;background:linear-gradient(#fff 50%,transparent 50%);background-size:1px 2px;background-position:0 0px"></div>
<div class="r" style="left:417px;top:713px;width:1px;height:16px;background:linear-gradient(#fff 50%,transparent 50%);background-size:1px 2px;background-position:0 0px"></div>
<div class="r" style="left:437px;top:713px;width:1px;height:16px;background:linear-gradient(#fff 50%,transparent 50%);background-size:1px 2px;background-position:0 0px"></div>
<div class="r" style="left:487px;top:713px;width:1px;height:16px;background:linear-gradient(#fff 50%,transparent 50%);background-size:1px 2px;background-position:0 0px"></div>
<div class="r" style="left:537px;top:713px;width:1px;height:16px;background:linear-gradient(#fff 50%,transparent 50%);background-size:1px 2px;background-position:0 0px"></div>
<div class="r" style="left:870px;top:713px;width:1px;height:16px;background:linear-gradient(#fff 50%,transparent 50%);background-size:1px 2px;background-position:0 0px"></div>
<div class="r" style="left:950px;top:713px;width:1px;height:16px;background:linear-gradient(#fff 50%,transparent 50%);background-size:1px 2px;background-position:0 0px"></div>
<div class="r" style="left:1030px;top:713px;width:1px;height:16px;background:linear-gradient(#fff 50%,transparent 50%);background-size:1px 2px;background-position:0 0px"></div>
<div class="r" style="left:1105px;top:713px;width:1px;height:16px;background:linear-gradient(#fff 50%,transparent 50%);background-size:1px 2px;background-position:0 0px"></div>
<div class="r" style="left:1180px;top:713px;width:1px;height:16px;background:linear-gradient(#fff 50%,transparent 50%);background-size:1px 2px;background-position:0 0px"></div>
<div class="t" style="left:259px;width:45px;text-align:right;top:715.69px;font-size:11px;line-height:13px;color:#000;">126</div>
<div class="t" style="left:347px;width:70px;text-align:center;top:714.99px;font-size:11px;line-height:14.4px;color:#000">02.02.2019</div>
<div class="t" style="left:437px;width:50px;text-align:center;top:714.99px;font-size:11px;line-height:14.4px;color:#000">1000</div>
<div class="t" style="left:487px;width:50px;text-align:center;top:714.99px;font-size:11px;line-height:14.4px;color:#000">1530</div>
<div class="t" style="left:541px;top:715.69px;font-size:11px;line-height:13px;color:#000;">Motorenöl</div>
<div class="t" style="left:951px;width:76px;text-align:right;top:715.69px;font-size:11px;line-height:13px;color:#1a1aff;">70.30</div>
<div class="r" style="left:257px;top:730px;width:1px;height:16px;background:linear-gradient(#c4c4c4 50%,transparent 50%);background-size:1px 2px;background-position:0 0px"></div>
<div class="r" style="left:307px;top:730px;width:1px;height:16px;background:linear-gradient(#c4c4c4 50%,transparent 50%);background-size:1px 2px;background-position:0 0px"></div>
<div class="r" style="left:347px;top:730px;width:1px;height:16px;background:linear-gradient(#c4c4c4 50%,transparent 50%);background-size:1px 2px;background-position:0 0px"></div>
<div class="r" style="left:417px;top:730px;width:1px;height:16px;background:linear-gradient(#c4c4c4 50%,transparent 50%);background-size:1px 2px;background-position:0 0px"></div>
<div class="r" style="left:437px;top:730px;width:1px;height:16px;background:linear-gradient(#c4c4c4 50%,transparent 50%);background-size:1px 2px;background-position:0 0px"></div>
<div class="r" style="left:487px;top:730px;width:1px;height:16px;background:linear-gradient(#c4c4c4 50%,transparent 50%);background-size:1px 2px;background-position:0 0px"></div>
<div class="r" style="left:537px;top:730px;width:1px;height:16px;background:linear-gradient(#c4c4c4 50%,transparent 50%);background-size:1px 2px;background-position:0 0px"></div>
<div class="r" style="left:870px;top:730px;width:1px;height:16px;background:linear-gradient(#c4c4c4 50%,transparent 50%);background-size:1px 2px;background-position:0 0px"></div>
<div class="r" style="left:950px;top:730px;width:1px;height:16px;background:linear-gradient(#c4c4c4 50%,transparent 50%);background-size:1px 2px;background-position:0 0px"></div>
<div class="r" style="left:1030px;top:730px;width:1px;height:16px;background:linear-gradient(#c4c4c4 50%,transparent 50%);background-size:1px 2px;background-position:0 0px"></div>
<div class="r" style="left:1105px;top:730px;width:1px;height:16px;background:linear-gradient(#c4c4c4 50%,transparent 50%);background-size:1px 2px;background-position:0 0px"></div>
<div class="r" style="left:1180px;top:730px;width:1px;height:16px;background:linear-gradient(#c4c4c4 50%,transparent 50%);background-size:1px 2px;background-position:0 0px"></div>
<div class="t" style="left:437px;width:50px;text-align:center;top:731.99px;font-size:11px;line-height:14.4px;color:#000">1530</div>
<div class="t" style="left:487px;width:50px;text-align:center;top:731.99px;font-size:11px;line-height:14.4px;color:#000">1000</div>
<div class="t" style="left:541px;top:732.69px;font-size:11px;line-height:13px;color:#000;">Motorenöl</div>
<div class="t" style="left:871px;width:76px;text-align:right;top:732.69px;font-size:11px;line-height:13px;color:#1a1aff;">70.30</div>
<div class="t" style="left:1032px;width:70px;text-align:right;top:732.69px;font-size:11px;line-height:13px;color:#1a1aff;">5.03</div>
<div class="t" style="left:1109px;top:732.69px;font-size:11px;line-height:13px;color:#000;">UStn</div>
<div class="r" style="left:241px;top:746px;width:1335px;height:17px;background:#e9e9e9"></div>
<div class="r" style="left:241px;top:746px;width:1335px;height:1px;background:linear-gradient(to right,#c4c4c4 50%,transparent 50%);background-size:2px 1px;background-position:0px 0"></div>
<div class="r" style="left:241px;top:763px;width:1335px;height:1px;background:linear-gradient(to right,#c4c4c4 50%,transparent 50%);background-size:2px 1px;background-position:0px 0"></div>
<div class="r" style="left:257px;top:747px;width:1px;height:16px;background:linear-gradient(#fff 50%,transparent 50%);background-size:1px 2px;background-position:0 0px"></div>
<div class="r" style="left:307px;top:747px;width:1px;height:16px;background:linear-gradient(#fff 50%,transparent 50%);background-size:1px 2px;background-position:0 0px"></div>
<div class="r" style="left:347px;top:747px;width:1px;height:16px;background:linear-gradient(#fff 50%,transparent 50%);background-size:1px 2px;background-position:0 0px"></div>
<div class="r" style="left:417px;top:747px;width:1px;height:16px;background:linear-gradient(#fff 50%,transparent 50%);background-size:1px 2px;background-position:0 0px"></div>
<div class="r" style="left:437px;top:747px;width:1px;height:16px;background:linear-gradient(#fff 50%,transparent 50%);background-size:1px 2px;background-position:0 0px"></div>
<div class="r" style="left:487px;top:747px;width:1px;height:16px;background:linear-gradient(#fff 50%,transparent 50%);background-size:1px 2px;background-position:0 0px"></div>
<div class="r" style="left:537px;top:747px;width:1px;height:16px;background:linear-gradient(#fff 50%,transparent 50%);background-size:1px 2px;background-position:0 0px"></div>
<div class="r" style="left:870px;top:747px;width:1px;height:16px;background:linear-gradient(#fff 50%,transparent 50%);background-size:1px 2px;background-position:0 0px"></div>
<div class="r" style="left:950px;top:747px;width:1px;height:16px;background:linear-gradient(#fff 50%,transparent 50%);background-size:1px 2px;background-position:0 0px"></div>
<div class="r" style="left:1030px;top:747px;width:1px;height:16px;background:linear-gradient(#fff 50%,transparent 50%);background-size:1px 2px;background-position:0 0px"></div>
<div class="r" style="left:1105px;top:747px;width:1px;height:16px;background:linear-gradient(#fff 50%,transparent 50%);background-size:1px 2px;background-position:0 0px"></div>
<div class="r" style="left:1180px;top:747px;width:1px;height:16px;background:linear-gradient(#fff 50%,transparent 50%);background-size:1px 2px;background-position:0 0px"></div>
<div class="t" style="left:259px;width:45px;text-align:right;top:749.69px;font-size:11px;line-height:13px;color:#000;">125</div>
<div class="t" style="left:347px;width:70px;text-align:center;top:748.99px;font-size:11px;line-height:14.4px;color:#000">01.02.2019</div>
<div class="t" style="left:437px;width:50px;text-align:center;top:748.99px;font-size:11px;line-height:14.4px;color:#000">1000</div>
<div class="t" style="left:487px;width:50px;text-align:center;top:748.99px;font-size:11px;line-height:14.4px;color:#000">3202</div>
<div class="t" style="left:541px;top:749.69px;font-size:11px;line-height:13px;color:#000;">Verkauf Beton</div>
<div class="t" style="left:871px;width:76px;text-align:right;top:749.69px;font-size:11px;line-height:13px;color:#1a1aff;">1&#39;000.00</div>
<div class="r" style="left:257px;top:764px;width:1px;height:5px;background:linear-gradient(#c4c4c4 50%,transparent 50%);background-size:1px 2px;background-position:0 0px"></div>
<div class="r" style="left:307px;top:764px;width:1px;height:5px;background:linear-gradient(#c4c4c4 50%,transparent 50%);background-size:1px 2px;background-position:0 0px"></div>
<div class="r" style="left:347px;top:764px;width:1px;height:5px;background:linear-gradient(#c4c4c4 50%,transparent 50%);background-size:1px 2px;background-position:0 0px"></div>
<div class="r" style="left:417px;top:764px;width:1px;height:5px;background:linear-gradient(#c4c4c4 50%,transparent 50%);background-size:1px 2px;background-position:0 0px"></div>
<div class="r" style="left:437px;top:764px;width:1px;height:5px;background:linear-gradient(#c4c4c4 50%,transparent 50%);background-size:1px 2px;background-position:0 0px"></div>
<div class="r" style="left:487px;top:764px;width:1px;height:5px;background:linear-gradient(#c4c4c4 50%,transparent 50%);background-size:1px 2px;background-position:0 0px"></div>
<div class="r" style="left:537px;top:764px;width:1px;height:5px;background:linear-gradient(#c4c4c4 50%,transparent 50%);background-size:1px 2px;background-position:0 0px"></div>
<div class="r" style="left:870px;top:764px;width:1px;height:5px;background:linear-gradient(#c4c4c4 50%,transparent 50%);background-size:1px 2px;background-position:0 0px"></div>
<div class="r" style="left:950px;top:764px;width:1px;height:5px;background:linear-gradient(#c4c4c4 50%,transparent 50%);background-size:1px 2px;background-position:0 0px"></div>
<div class="r" style="left:1030px;top:764px;width:1px;height:5px;background:linear-gradient(#c4c4c4 50%,transparent 50%);background-size:1px 2px;background-position:0 0px"></div>
<div class="r" style="left:1105px;top:764px;width:1px;height:5px;background:linear-gradient(#c4c4c4 50%,transparent 50%);background-size:1px 2px;background-position:0 0px"></div>
<div class="r" style="left:1180px;top:764px;width:1px;height:5px;background:linear-gradient(#c4c4c4 50%,transparent 50%);background-size:1px 2px;background-position:0 0px"></div>
<div class="r" style="left:1576px;top:134px;width:1px;height:635px;background:#fff"></div>
<div class="r" style="left:1577px;top:134px;width:16px;height:635px;background:#f0f0f0"></div>
<div class="r" style="left:1577px;top:151px;width:16px;height:351px;background:#cdcdcd"></div>
<svg style="left:1580px;top:139px" width="9" height="8"><path d="M1 6.5 L4.5 2 L8 6.5" fill="none" stroke="#5f5f5f" stroke-width="2"/></svg>
<svg style="left:1580px;top:756px" width="9" height="8"><path d="M1 1.5 L4.5 6 L8 1.5" fill="none" stroke="#5f5f5f" stroke-width="2"/></svg>
<div class="r" style="left:1px;top:773px;width:1596px;height:23px;background:linear-gradient(to bottom,#f4f8fe 0%,#d6e5fa 25%,#b4cdf2 60%,#92b4e6 100%)"></div>
<div class="r" style="left:0px;top:796px;width:1598px;height:1px;background:#6a6a6a"></div>
<div class="r" style="left:6px;top:778px;width:1px;height:14px;background:#fff"></div>
<div class="r" style="left:146px;top:778px;width:1px;height:14px;background:#fff"></div>
<div class="t" style="left:21px;top:778.69px;font-size:11px;line-height:13px;">Server : LIVINGSTON</div>
<div class="t" style="left:161px;top:778.69px;font-size:11px;line-height:13px;letter-spacing:-0.045px;">Benutzer : WS_01_Std</div>
<div class="r" style="left:290px;top:778px;width:1px;height:14px;background:#fff"></div>
<div class="r" style="left:295px;top:779px;width:60px;height:12px;background:#e0e0e0;border:1px solid #b4bccc"></div>
<div class="r" style="left:362px;top:778px;width:1px;height:14px;background:#fff"></div>
<div class="t" style="left:377px;top:778.69px;font-size:11px;line-height:13px;letter-spacing:0.275px;">Anzahl Zeilen : 60</div>
<div class="r" style="left:487px;top:778px;width:1px;height:14px;background:#fff"></div>
<div class="t" style="left:1342px;top:778.69px;font-size:11px;line-height:13px;color:#1a1aff;letter-spacing:0.151px;">Network Version 9.4, Build 9.3.1000.4470 (x64)</div>
<div class="r" style="left:1528px;top:786px;width:70px;height:11px;background:#7ab32a;border-top:1px solid #5a6a50"></div>
</body></html>
